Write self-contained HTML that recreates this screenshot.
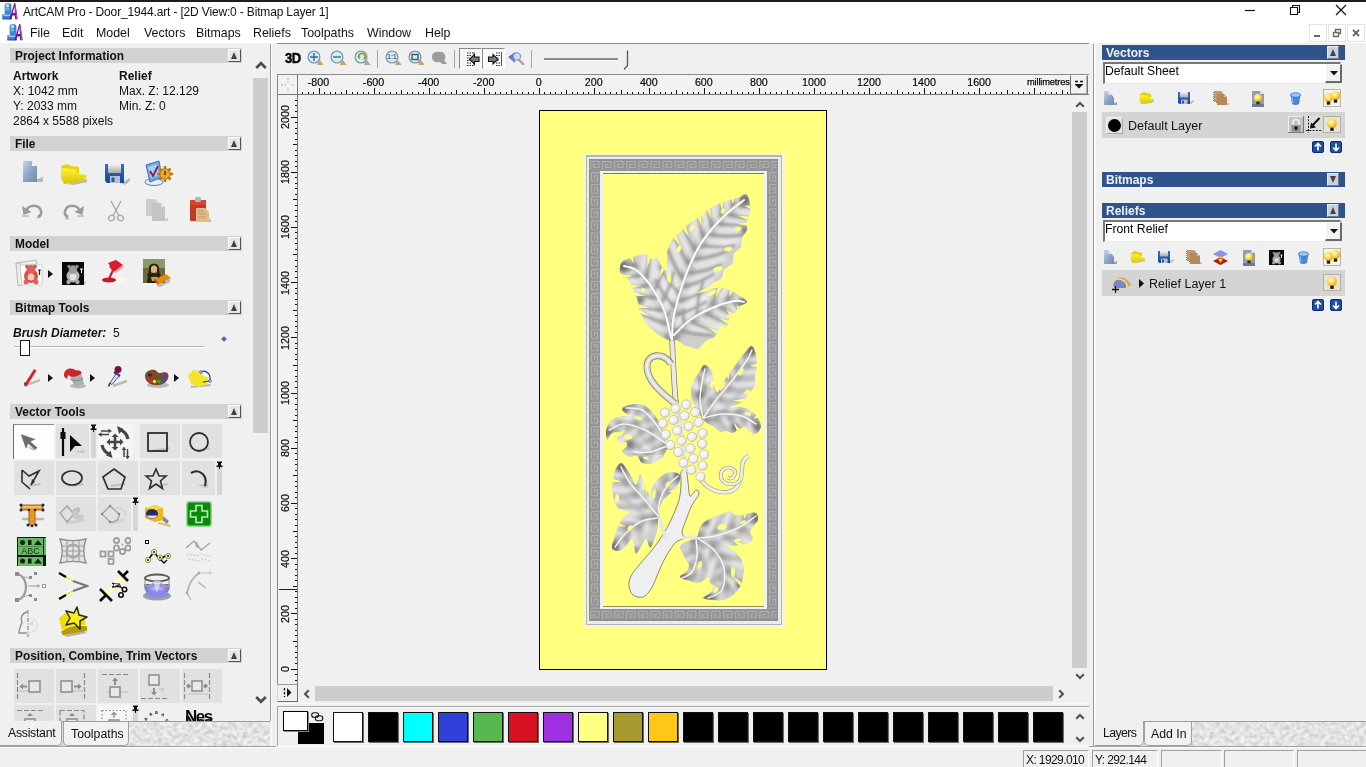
<!DOCTYPE html><html><head><meta charset="utf-8"><title>ArtCAM Pro</title><style>
*{box-sizing:border-box;margin:0;padding:0}
html,body{width:1366px;height:767px;overflow:hidden;background:#f0f0f0;font-family:"Liberation Sans",sans-serif;font-size:12px;color:#000}
.a{position:absolute}
.t{position:absolute;white-space:nowrap;line-height:1;margin-top:1px}
.b{font-weight:bold}
.hdr{position:absolute;left:10px;width:232px;height:15px;background:#d2d2d2}
.hdr span{position:absolute;left:5px;top:2px;font-weight:bold;font-size:11.900px;line-height:13px;white-space:nowrap;color:#111}
.hbtn{position:absolute;width:12px;height:13px;background:#e6e6e6;border-right:1px solid #555;border-bottom:1px solid #555;border-left:1px solid #fff;border-top:1px solid #fff}
.hbtn i{position:absolute;left:1.500px;top:2px;width:0;height:0;border-left:3.500px solid transparent;border-right:3.500px solid transparent;border-bottom:7px solid #444}
.hbtn.dn i{border-bottom:none;border-top:7px solid #444}
.bh{position:absolute;left:1102px;width:243px;height:15px;background:#2f548b}
.bh span{position:absolute;left:4px;top:2px;font-weight:bold;font-size:12px;line-height:13px;color:#eef2f8;white-space:nowrap}
.combo{position:absolute;left:1103px;width:238px;height:22px;background:#fff;border-top:2px solid #777;border-left:2px solid #777;border-bottom:1px solid #e8e8e8;border-right:1px solid #e8e8e8}
.combo span{position:absolute;left:0px;top:0px;font-size:12.200px;line-height:14px;white-space:nowrap}
.lrow{position:absolute;left:1102px;width:243px;height:26px;background:#d4d4d4}
</style></head><body><div id="app" style="position:absolute;left:0;top:0;width:1366px;height:767px;will-change:transform"><div class="a" style="left:0;top:0;width:1366px;height:2px;background:#1c1c1c"></div><div class="a" style="left:0;top:2px;width:1366px;height:41px;background:#fff"></div><svg class="a" style="left:2.3px;top:2.7px" width="16" height="17" viewBox="0 0 16 17"><rect x="2.600" y=".3" width="6.800" height="11.500" rx="2.200" fill="#3f86d2"/><rect x="3.600" y="1" width="3.600" height="3.200" rx="1.500" fill="#b9e2f4"/><rect x="3.200" y="4.800" width="4" height="2.600" fill="#6db0e6"/><path d="M.3 11.200h9.400v4.800H.3z" fill="#3b7fd4"/><path d="M1.500 12.300h6.500" stroke="#cfe6fa" stroke-width=".9"/><path d="M.3 15.300h9.400v1.200H.3z" fill="#2559b2"/><path d="M12.300 0l1 0 2.400 16.300h-2.500l-.4-3.800h-2.300l-1.300 3.800H7.300z" fill="#6b1b8f"/><path d="M12.400 3.500l.5 6.500h-2.200z" fill="#fff"/><path d="M13.300 3l1.600 13" stroke="#c24ad0" stroke-width=".9"/></svg><svg class="a" style="left:7.3px;top:23.7px" width="16" height="17" viewBox="0 0 16 17"><rect x="2.600" y=".3" width="6.800" height="11.500" rx="2.200" fill="#3f86d2"/><rect x="3.600" y="1" width="3.600" height="3.200" rx="1.500" fill="#b9e2f4"/><rect x="3.200" y="4.800" width="4" height="2.600" fill="#6db0e6"/><path d="M.3 11.200h9.400v4.800H.3z" fill="#3b7fd4"/><path d="M1.500 12.300h6.500" stroke="#cfe6fa" stroke-width=".9"/><path d="M.3 15.300h9.400v1.200H.3z" fill="#2559b2"/><path d="M12.300 0l1 0 2.400 16.300h-2.500l-.4-3.800h-2.300l-1.300 3.800H7.300z" fill="#6b1b8f"/><path d="M12.400 3.500l.5 6.500h-2.200z" fill="#fff"/><path d="M13.300 3l1.600 13" stroke="#c24ad0" stroke-width=".9"/></svg><div class="t" style="left:23px;top:5px;font-size:12px;letter-spacing:-.16px;color:#111">ArtCAM Pro - Door_1944.art - [2D View:0 - Bitmap Layer 1]</div><div class="t" style="left:30px;top:26px;font-size:12.400px;color:#111">File</div><div class="t" style="left:62px;top:26px;font-size:12.400px;color:#111">Edit</div><div class="t" style="left:96px;top:26px;font-size:12.400px;color:#111">Model</div><div class="t" style="left:144px;top:26px;font-size:12.400px;color:#111">Vectors</div><div class="t" style="left:196px;top:26px;font-size:12.400px;color:#111">Bitmaps</div><div class="t" style="left:253px;top:26px;font-size:12.400px;color:#111">Reliefs</div><div class="t" style="left:301px;top:26px;font-size:12.400px;color:#111">Toolpaths</div><div class="t" style="left:367px;top:26px;font-size:12.400px;color:#111">Window</div><div class="t" style="left:425px;top:26px;font-size:12.400px;color:#111">Help</div><svg class="a" style="left:1240px;top:2px" width="126" height="20" viewBox="0 0 126 20"><path d="M5 8.500h10" stroke="#111" stroke-width="1.2"/><path d="M50.500 5.500h7v7h-7zM52.500 5.500v-2h7v7h-2" stroke="#111" stroke-width="1.1" fill="none"/><path d="M96 3l10 10M106 3l-10 10" stroke="#111" stroke-width="1.2"/></svg><svg class="a" style="left:1308px;top:24px" width="58" height="18" viewBox="0 0 58 18"><g fill="none" stroke="#e4e4e4"><rect x="1.500" y="0.500" width="17" height="17"/><rect x="20.500" y="0.500" width="17" height="17"/><rect x="39.500" y="0.500" width="17" height="17"/></g><path d="M6 12h6" stroke="#666" stroke-width="2"/><path d="M25.500 8.500h5v4h-5zM27.500 8v-2.500h5v4h-2" stroke="#666" stroke-width="1.300" fill="none"/><path d="M45 6l6 6M51 6l-6 6" stroke="#666" stroke-width="1.800"/></svg><div class="a" style="left:270px;top:44px;width:1px;height:677px;background:#9a9a9a"></div><div class="a" style="left:271px;top:44px;width:1px;height:703px;background:#fcfcfc"></div><div class="a" style="left:1094px;top:44px;width:2px;height:703px;background:#fafafa"></div><div class="a" style="left:1093px;top:44px;width:1px;height:703px;background:#9a9a9a"></div><div class="a" style="left:277px;top:43px;width:812px;height:1px;background:#8c8c8c"></div><svg class="a" width="0" height="0" style="left:0;top:0"><defs>
<linearGradient id="gDoc" x1="0" y1="0" x2="1" y2="1"><stop offset="0" stop-color="#c9d6ea"/><stop offset=".5" stop-color="#8fa6c8"/><stop offset="1" stop-color="#6f88ad"/></linearGradient>
<linearGradient id="gFold" x1="0" y1="0" x2="0" y2="1"><stop offset="0" stop-color="#fff23a"/><stop offset="1" stop-color="#d9c400"/></linearGradient>
<linearGradient id="gBlue" x1="0" y1="0" x2="0" y2="1"><stop offset="0" stop-color="#2d6fd0"/><stop offset="1" stop-color="#1548a0"/></linearGradient>
<linearGradient id="gMet" x1="0" y1="0" x2="0" y2="1"><stop offset="0" stop-color="#f4f4f4"/><stop offset="1" stop-color="#a8a8a8"/></linearGradient>
<radialGradient id="gBulb" cx=".4" cy=".35" r=".7"><stop offset="0" stop-color="#fffbe0"/><stop offset=".5" stop-color="#ffd84a"/><stop offset="1" stop-color="#e0a000"/></radialGradient>
<radialGradient id="gPurp" cx=".5" cy=".4" r=".7"><stop offset="0" stop-color="#c8c4ff"/><stop offset="1" stop-color="#4a46c8"/></radialGradient>
</defs></svg><div class="hdr" style="top:48px"><span>Project Information</span></div><div class="hbtn" style="left:228px;top:49px;width:13px"><i style="left:2px"></i></div><div class="t b" style="left:13px;top:69px;font-size:12px;color:#111">Artwork</div><div class="t b" style="left:119px;top:69px;font-size:12px;color:#111">Relief</div><div class="t" style="left:13px;top:84px;font-size:12px;color:#111">X: 1042 mm</div><div class="t" style="left:119px;top:84px;font-size:12px;color:#111">Max. Z: 12.129</div><div class="t" style="left:13px;top:99px;font-size:12px;color:#111">Y: 2033 mm</div><div class="t" style="left:119px;top:99px;font-size:12px;color:#111">Min. Z: 0</div><div class="t" style="left:13px;top:114px;font-size:12px;color:#111">2864 x 5588 pixels</div><div class="hdr" style="top:136px"><span>File</span></div><div class="hbtn" style="left:228px;top:137px;width:13px"><i style="left:2px"></i></div><svg class="a" style="left:21px;top:160px" width="24" height="26" viewBox="0 0 24 26"><path d="M12 21l10-4v5H4z" fill="#b9b9b9"/><path d="M2 1h9l5 5v16H2z" fill="url(#gDoc)"/><path d="M11 1v5h5z" fill="#f4f7fc"/></svg><svg class="a" style="left:59px;top:162px" width="30" height="24" viewBox="0 0 30 24"><path d="M8 22l20-5v3l-14 3z" fill="#b9b9b9"/><path d="M2 4l6-2 4 2 8 1v6l-16 8z" fill="#e9d400"/><path d="M2 6l14 1 4 5 8 1-3 6-20 3-3-6z" fill="url(#gFold)"/></svg><svg class="a" style="left:103px;top:162px" width="28" height="24" viewBox="0 0 28 24"><path d="M18 21l9-5v3l-5 4z" fill="#b9b9b9"/><path d="M2 2h19v19H4l-2-2z" fill="url(#gBlue)"/><rect x="5" y="2" width="13" height="9" fill="url(#gMet)"/><rect x="7" y="14" width="10" height="7" fill="#b9c0cc"/><rect x="8.500" y="15.500" width="3" height="4.500" fill="#2558b0"/></svg><svg class="a" style="left:143px;top:159px" width="30" height="28" viewBox="0 0 30 28"><ellipse cx="11" cy="23" rx="9" ry="3.500" fill="#e8ecf6" stroke="#5a78b8" stroke-width="1"/><path d="M3 6l13-4 3 16-12 5z" fill="#6fa8e8" stroke="#3f6cc0" stroke-width="1"/><path d="M5 8l9-3 2 11-8 3z" fill="#9fd0f6"/><path d="M7 12l3 5 5-10" stroke="#a01030" stroke-width="1.800" fill="none"/><circle cx="22" cy="15" r="6" fill="#d99a1a"/><circle cx="22" cy="15" r="2" fill="#6b4a08"/><path d="M22 7v16M14 15h16M16.500 9.500l11 11M27.500 9.500l-11 11" stroke="#b07810" stroke-width="2.500"/><circle cx="22" cy="15" r="4.500" fill="#e6aa28"/><path d="M22 12v4" stroke="#5a3c00" stroke-width="1.600"/></svg><svg class="a" style="left:20px;top:202px" width="26" height="18" viewBox="0 0 26 18"><path d="M2 14h7M17 16l4-2" stroke="#c6c6c6" stroke-width="2"/><path d="M6 9c3-7 13-7 15 0 .8 3-1 5-3 6" fill="none" stroke="#9a9a9a" stroke-width="2.600"/><path d="M2 4l1.500 9 8-3z" fill="#9a9a9a"/></svg><svg class="a" style="left:60px;top:202px" width="26" height="18" viewBox="0 0 26 18"><path d="M17 14h7M5 16l4 1" stroke="#c6c6c6" stroke-width="2"/><path d="M20 9c-3-7-13-7-15 0-.8 3 1 5 3 6" fill="none" stroke="#9a9a9a" stroke-width="2.600"/><path d="M24 4l-1.500 9-8-3z" fill="#9a9a9a"/></svg><svg class="a" style="left:106px;top:199px" width="20" height="24" viewBox="0 0 20 24"><path d="M5 2l8 15M15 2l-8 15" stroke="#a8a8a8" stroke-width="1.400" fill="none"/><ellipse cx="5.500" cy="19" rx="3" ry="2.600" fill="none" stroke="#a8a8a8" stroke-width="1.400" transform="rotate(-30 5.500 19)"/><ellipse cx="14.500" cy="19" rx="3" ry="2.600" fill="none" stroke="#a8a8a8" stroke-width="1.400" transform="rotate(30 14.500 19)"/></svg><svg class="a" style="left:144px;top:197px" width="26" height="26" viewBox="0 0 26 26"><path d="M12 24l12-3v3H8z" fill="#cfcfcf"/><path d="M2 2h9l3 3v14H2z" fill="#cdcdcd"/><path d="M8 6h9l4 4v14H8z" fill="#c4c4c4"/><path d="M17 6v4h4z" fill="#e4e4e4"/></svg><svg class="a" style="left:188px;top:196px" width="24" height="28" viewBox="0 0 24 28"><path d="M10 26l13-3v3H7z" fill="#b9b9b9"/><rect x="2" y="4" width="16" height="21" rx="1" fill="#c33a24"/><path d="M2 4h16v5H2z" fill="#d9442c"/><rect x="7" y="1" width="6" height="5" rx="1.500" fill="#b9b2c4"/><path d="M8 12h9l4 4v10H8z" fill="#e2b988"/><path d="M10 15h6M10 18h8M10 21h8" stroke="#c79660" stroke-width="1"/></svg><div class="hdr" style="top:236px"><span>Model</span></div><div class="hbtn" style="left:228px;top:237px;width:13px"><i style="left:2px"></i></div><svg class="a" style="left:14px;top:258px" width="32" height="30" viewBox="0 0 32 30"><path d="M2 5l20-3 1 4-20 3z" fill="#ededed" stroke="#aaa" stroke-width=".8"/><path d="M2 5l2 23 4-1-2-22z" fill="#ededed" stroke="#aaa" stroke-width=".8"/><path d="M6 7h22v20H8z" fill="#fff" stroke="#c8c8c8" stroke-width=".8"/><circle cx="17" cy="18" r="7" fill="#d6504a"/><circle cx="17" cy="11.500" r="4.500" fill="#e0605a"/><circle cx="13" cy="8.500" r="1.800" fill="#d6504a"/><circle cx="21" cy="8.500" r="1.800" fill="#d6504a"/><circle cx="17" cy="19" r="3.500" fill="#f7c9c4"/><circle cx="12" cy="24" r="2.500" fill="#e0605a"/><circle cx="22" cy="24" r="2.500" fill="#e0605a"/><path d="M24 12h3M25.500 12v5" stroke="#222" stroke-width="1.200"/></svg><svg class="a" style="left:48px;top:270px" width="5" height="8" viewBox="0 0 5 8"><path d="M0 0l5 4-5 4z" fill="#111"/></svg><svg class="a" style="left:61px;top:261px" width="26" height="26" viewBox="0 0 26 26"><path d="M22 22l3-2v3z" fill="#b9b9b9"/><rect x="1" y="1" width="22" height="23" fill="#080808"/><circle cx="12" cy="15" r="6.500" fill="#b4b4b4"/><circle cx="12" cy="8.500" r="4.200" fill="#9a9a9a"/><circle cx="8" cy="5.500" r="1.800" fill="#888"/><circle cx="16" cy="5.500" r="1.800" fill="#888"/><circle cx="12" cy="16" r="3.300" fill="#e4e4e4"/><circle cx="7.500" cy="21" r="2.200" fill="#aaa"/><circle cx="16.500" cy="21" r="2.200" fill="#aaa"/><path d="M19 8h3M20.500 8v4" stroke="#fff" stroke-width="1.100"/></svg><svg class="a" style="left:99px;top:259px" width="30" height="26" viewBox="0 0 30 26"><ellipse cx="17" cy="21" rx="11" ry="3.500" fill="#fbf6ec"/><ellipse cx="10" cy="21" rx="7" ry="2.600" fill="#c81824"/><path d="M10 20l4-9" stroke="#c81824" stroke-width="2"/><path d="M14 11l-3-4" stroke="#c81824" stroke-width="2"/><path d="M9 4l8-3 7 5-9 7z" fill="#d81c28"/><path d="M15 13l9-7 1 2-8 6z" fill="#f6a0a0"/></svg><svg class="a" style="left:142px;top:258px" width="30" height="30" viewBox="0 0 30 30"><path d="M14 28l14-7v3l-10 5z" fill="#b9b9b9"/><rect x="1" y="1" width="22" height="24" fill="#6b6a3a"/><path d="M1 1h22v9H1z" fill="#8a9a6a"/><path d="M5 25c0-8 3-10 7-10s7 2 7 10z" fill="#2a2418"/><ellipse cx="12" cy="10" rx="4" ry="5" fill="#d9b27a"/><path d="M7 10c0-6 10-6 10 0 0 4 1 6 2 8h-4V9l-3-2-3 2v9H5c1-2 2-4 2-8z" fill="#2a1c10"/><path d="M9 19h7l-2 4h-4z" fill="#caa068"/><path d="M12 22l12-6 5 4-13 7z" fill="#e88a10"/><path d="M12 22l4 5v-3l-4-4z" fill="#a85c00"/></svg><div class="hdr" style="top:300px"><span>Bitmap Tools</span></div><div class="hbtn" style="left:228px;top:301px;width:13px"><i style="left:2px"></i></div><div class="t b" style="left:13px;top:326px;font-size:12px;font-style:italic;color:#111">Brush Diameter:</div><div class="t" style="left:113px;top:326px;font-size:12px;color:#111">5</div><div class="a" style="left:14px;top:346px;width:190px;height:2px;background:#b4b4b4;border-bottom:1px solid #fff"></div><div class="a" style="left:20px;top:340px;width:10px;height:16px;background:#fff;border:1px solid #1a1a1a"></div><div class="a" style="left:222px;top:337px;width:4px;height:4px;background:#4a6a9a;transform:rotate(45deg)"></div><svg class="a" style="left:20px;top:367px" width="24" height="22" viewBox="0 0 24 22"><path d="M4 19l16-6" stroke="#b9b9b9" stroke-width="2"/><path d="M4 18l10-16 2.500 1.500-10 16z" fill="#d8202c"/><path d="M4 18l.5-3 2 1.500z" fill="#333"/></svg><svg class="a" style="left:48px;top:374px" width="5" height="8" viewBox="0 0 5 8"><path d="M0 0l5 4-5 4z" fill="#111"/></svg><svg class="a" style="left:61px;top:366px" width="28" height="24" viewBox="0 0 28 24"><ellipse cx="17" cy="20" rx="8" ry="2.500" fill="#b9b9b9"/><path d="M8 8l12-2 3 12-9 3z" fill="#a8b0b0"/><ellipse cx="14" cy="7.500" rx="6.500" ry="3" fill="#d02020" transform="rotate(-12 14 7.500)"/><path d="M3 8c1-6 9-7 12-3-4 0-8 2-9 8-2-1-3.500-3-3-5z" fill="#d02828"/><path d="M9 13c4 3 10 2 13-1" stroke="#788" stroke-width="1" fill="none"/></svg><svg class="a" style="left:90px;top:374px" width="5" height="8" viewBox="0 0 5 8"><path d="M0 0l5 4-5 4z" fill="#111"/></svg><svg class="a" style="left:105px;top:365px" width="26" height="24" viewBox="0 0 26 24"><path d="M8 21l14-5" stroke="#b9b9b9" stroke-width="2.500"/><circle cx="13" cy="4.500" r="3.500" fill="#7a1040"/><path d="M9 7l6 4" stroke="#3a2a6a" stroke-width="2.200"/><path d="M11 9l-6 9 2 1.500 7-8.500z" fill="#dfe8ff" stroke="#4848a8" stroke-width="1"/><path d="M5 18l-1.500 3.500" stroke="#2828a0" stroke-width="1.600"/></svg><svg class="a" style="left:143px;top:367px" width="28" height="22" viewBox="0 0 28 22"><ellipse cx="15" cy="18" rx="11" ry="3" fill="#b9b9b9"/><path d="M2 9c0-5 6-7 10-6 2 .5 2 3 5 3s6-2 8 1c2 4-2 10-9 11-8 1-14-3-14-9z" fill="#7a4a2a"/><ellipse cx="7" cy="8" rx="2" ry="1.500" fill="#3a2010"/><circle cx="7" cy="13" r="1.800" fill="#e02020"/><circle cx="11.500" cy="14.500" r="1.800" fill="#f0e020"/><circle cx="16" cy="14.500" r="1.800" fill="#30b030"/><circle cx="20" cy="13" r="1.800" fill="#3050e0"/><circle cx="22.500" cy="9.500" r="1.600" fill="#7030c0"/></svg><svg class="a" style="left:174px;top:374px" width="5" height="8" viewBox="0 0 5 8"><path d="M0 0l5 4-5 4z" fill="#111"/></svg><svg class="a" style="left:185px;top:366px" width="30" height="24" viewBox="0 0 30 24"><path d="M6 21l20-2" stroke="#b9b9b9" stroke-width="2"/><path d="M3 10l5-6 7 1 3 5 6 2-2 6-8 3-8-3z" fill="#f4e42a"/><path d="M16 6c5-3 10 2 9 9l-7 1" fill="none" stroke="#2a3a9a" stroke-width="1.200"/><circle cx="16" cy="6" r="1.300" fill="#fff" stroke="#2a3a9a" stroke-width=".8"/><circle cx="25" cy="15" r="1.300" fill="#fff" stroke="#2a3a9a" stroke-width=".8"/></svg><div class="hdr" style="top:404px"><span>Vector Tools</span></div><div class="hbtn" style="left:228px;top:405px;width:13px"><i style="left:2px"></i></div><div class="hdr" style="top:648px"><span>Position, Combine, Trim Vectors</span></div><div class="hbtn" style="left:228px;top:649px;width:13px"><i style="left:2px"></i></div><div class="a" style="left:13px;top:424px;width:41px;height:35px;background:#fdfdfd;border-left:1px solid #6a6a6a;border-top:1px solid #8a8a8a"></div><svg class="a" style="left:19px;top:431px" width="22" height="22" viewBox="0 0 22 22"><path d="M6 15l12 3-4 1.500z" fill="#c4c4c4"/><path d="M3 2l14 7-5.500 1.500 6 7-2.500 2-6-7-3 4.500z" fill="#6e6e6e" transform="rotate(-8 11 11)"/></svg><div class="a" style="left:56px;top:424px;width:33px;height:34px;background:#e1e1e1"></div><svg class="a" style="left:58px;top:426px" width="28" height="32" viewBox="0 0 28 32"><path d="M16 26l10-2v3z" fill="#c4c4c4"/><path d="M5 2v28" stroke="#0a0a0a" stroke-width="2.200"/><rect x="2.500" y="6" width="5" height="7" fill="#0a0a0a"/><path d="M12 9l12 11h-7l-5 6z" fill="#0a0a0a"/></svg><div class="a" style="left:91px;top:428px;width:5px;height:30px;background:#d6d6d6"></div><svg class="a" style="left:90px;top:424px" width="7" height="8" viewBox="0 0 7 8"><path d="M1 .5h5v1.500H5v2.500h1.500V6H4v2H3V6H.5V4.500H2V2H1z" fill="#111"/></svg><div class="a" style="left:98px;top:424px;width:35px;height:34px;background:#f5f5f5"></div><svg class="a" style="left:98px;top:425px" width="34" height="34" viewBox="0 0 34 34"><path d="M17 8.500l3.500 3.500h-2.200v3.700h3.700v-2.200l3.500 3.500-3.500 3.500v-2.200h-3.700v3.700h2.200L17 25.500l-3.500-3.500h2.200v-3.700H12v2.200L8.500 17l3.500-3.500v2.200h3.700V12h-2.200z" fill="#454545"/><g fill="none" stroke="#454545" stroke-width="3.200"><path d="M21.500 4.500a13 13 0 0 1 8.500 9.500"/><path d="M4 20a13 13 0 0 0 8 9.500"/></g><path d="M19 1l6.500 3-4.500 5z" fill="#454545"/><path d="M14.500 33l-6.500-2.500 4.500-5z" fill="#454545"/><path d="M3 6h8M3 9.500h8" stroke="#454545" stroke-width="1.500"/><path d="M10.500 3.800l3.500 2.200-3.500 2.200zM3.500 11.700L0 9.500l3.500-2.200z" fill="#454545"/><path d="M26 24v8M29.500 24v8" stroke="#454545" stroke-width="1.500"/><path d="M23.800 25l2.200-3.500 2.200 3.500zM27.300 31l2.200 3.500 2.200-3.500z" fill="#454545"/></svg><div class="a" style="left:140px;top:424px;width:40px;height:34px;background:#e1e1e1"></div><svg class="a" style="left:145px;top:431px" width="26" height="24" viewBox="0 0 26 24"><path d="M6 19l18-3 1 2-16 3z" fill="#c4c4c4"/><rect x="3" y="2" width="19" height="18" fill="none" stroke="#2e2e2e" stroke-width="1.800"/></svg><div class="a" style="left:182px;top:424px;width:40px;height:34px;background:#e1e1e1"></div><svg class="a" style="left:187px;top:431px" width="26" height="24" viewBox="0 0 26 24"><path d="M8 19l14-3 2 2-12 3z" fill="#c4c4c4"/><circle cx="12" cy="11" r="9" fill="none" stroke="#2e2e2e" stroke-width="1.800"/></svg><div class="a" style="left:14px;top:461px;width:40px;height:34px;background:#e1e1e1"></div><svg class="a" style="left:18px;top:467px" width="26" height="24" viewBox="0 0 26 24"><path d="M6 19l16-3 1 2-12 2z" fill="#c4c4c4"/><path d="M4 3l7 6 10-5-8 14" fill="none" stroke="#2e2e2e" stroke-width="1.600"/><path d="M4 3v12l8 7" fill="none" stroke="#2e2e2e" stroke-width="1.600"/><path d="M13 18l1-6 3 3z" fill="#2e2e2e"/></svg><div class="a" style="left:56px;top:461px;width:40px;height:34px;background:#e1e1e1"></div><svg class="a" style="left:59px;top:469px" width="28" height="20" viewBox="0 0 28 20"><path d="M10 16l14-2 1 2-12 2z" fill="#c4c4c4"/><ellipse cx="13" cy="9" rx="10" ry="7" fill="none" stroke="#2e2e2e" stroke-width="1.700"/></svg><div class="a" style="left:98px;top:461px;width:40px;height:34px;background:#e1e1e1"></div><svg class="a" style="left:101px;top:467px" width="28" height="24" viewBox="0 0 28 24"><path d="M8 18l16-2 1 2-14 2z" fill="#c4c4c4"/><path d="M13 2l11 8-4 12H7L2 10z" fill="none" stroke="#2e2e2e" stroke-width="1.700"/></svg><div class="a" style="left:140px;top:461px;width:40px;height:34px;background:#e1e1e1"></div><svg class="a" style="left:144px;top:467px" width="26" height="24" viewBox="0 0 26 24"><path d="M12 18l12-2v2l-10 2z" fill="#c4c4c4"/><path d="M12 2l3 7h7l-5.500 5 2 7.500L12 17l-6.500 4.500 2-7.500L2 9h7z" fill="none" stroke="#2e2e2e" stroke-width="1.600"/></svg><div class="a" style="left:182px;top:461px;width:33px;height:34px;background:#e1e1e1"></div><svg class="a" style="left:187px;top:468px" width="24" height="22" viewBox="0 0 24 22"><path d="M10 17l10-1 2 3-4 1z" fill="#c4c4c4"/><path d="M4 5c8-5 17 2 14 13" fill="none" stroke="#2e2e2e" stroke-width="2.100"/></svg><div class="a" style="left:217px;top:465px;width:5px;height:30px;background:#d6d6d6"></div><svg class="a" style="left:216px;top:461px" width="7" height="8" viewBox="0 0 7 8"><path d="M1 .5h5v1.500H5v2.500h1.500V6H4v2H3V6H.5V4.500H2V2H1z" fill="#111"/></svg><svg class="a" style="left:18px;top:502px" width="28" height="26" viewBox="0 0 28 26"><path d="M4 17h22" stroke="#b8b8b8" stroke-width="2.500"/><path d="M3 3h22v5h-8v15h-6V8H3z" fill="#e89a20"/><path d="M5 4h18v2H5z" fill="#f8c060"/><path d="M3 3h22v5h-8v15h-6V8H3z" fill="none" stroke="#8a5200" stroke-width=".8"/><g fill="#1a1a7a"><circle cx="3" cy="3" r="1.500"/><circle cx="25" cy="3" r="1.500"/><circle cx="3" cy="8" r="1.500"/><circle cx="25" cy="8" r="1.500"/><circle cx="11" cy="8" r="1.300"/><circle cx="17" cy="8" r="1.300"/><circle cx="10" cy="23" r="1.500"/><circle cx="18" cy="23" r="1.500"/><circle cx="14" cy="24" r="1.300"/></g></svg><div class="a" style="left:56px;top:497px;width:40px;height:34px;background:#e1e1e1"></div><svg class="a" style="left:58px;top:503px" width="30" height="24" viewBox="0 0 30 24"><path d="M8 20l18-3" stroke="#cfcfcf" stroke-width="3"/><path d="M2 10l7-7 7 8-7 8z" fill="none" stroke="#a2a2a2" stroke-width="1.300"/><ellipse cx="18" cy="8" rx="5" ry="3" fill="#bdbdbd" transform="rotate(-35 18 8)"/><path d="M14 9c0 6 4 9 10 7l3-4c-5 1-8-1-8-6z" fill="#c8c8c8"/></svg><div class="a" style="left:98px;top:497px;width:33px;height:34px;background:#e1e1e1"></div><svg class="a" style="left:99px;top:503px" width="30" height="24" viewBox="0 0 30 24"><path d="M10 20l16-3" stroke="#d4d4d4" stroke-width="3"/><path d="M3 11l8-8 9 8c1 5-4 9-9 8z" fill="none" stroke="#a2a2a2" stroke-width="1.300"/><circle cx="3" cy="11" r="1.200" fill="#888"/><circle cx="11" cy="3" r="1.200" fill="#888"/><circle cx="20" cy="11" r="1.200" fill="#888"/><circle cx="11" cy="19" r="1.200" fill="#888"/><path d="M17 5c6-1 10 3 9 9" fill="none" stroke="#d0d0d0" stroke-width="1.300"/></svg><div class="a" style="left:133px;top:501px;width:5px;height:30px;background:#d6d6d6"></div><svg class="a" style="left:132px;top:497px" width="7" height="8" viewBox="0 0 7 8"><path d="M1 .5h5v1.500H5v2.500h1.500V6H4v2H3V6H.5V4.500H2V2H1z" fill="#111"/></svg><svg class="a" style="left:143px;top:502px" width="30" height="26" viewBox="0 0 30 26"><path d="M16 20l12 3-1 2-12-3z" fill="#d8c070"/><path d="M20 14l6 5-2 3-5-4z" fill="#8a8a9a"/><path d="M2 6l10-3 8 3v12l-8 2-10-4z" fill="#e8b820"/><path d="M2 6l10-3 8 3-8 2z" fill="#f8d850"/><ellipse cx="9" cy="12" rx="6" ry="5" fill="#2a2a6a"/><path d="M3.500 13.500a6 5 0 0 0 11 0z" fill="#e8d8d8"/></svg><svg class="a" style="left:185px;top:500px" width="28" height="28" viewBox="0 0 28 28"><rect x="1" y="1" width="26" height="26" rx="3" fill="#9ad890"/><rect x="2.500" y="2.500" width="23" height="23" rx="2" fill="#0a8a0a"/><path d="M11 5.500h6v5.500h5.500v6H17v5.500h-6V17H5.500v-6H11z" fill="none" stroke="#baf0b0" stroke-width="1.600"/></svg><svg class="a" style="left:16px;top:536px" width="30" height="30" viewBox="0 0 30 30"><rect x="1" y="1" width="29" height="29" fill="#0a1a0a"/><rect x="2" y="2" width="25" height="17" fill="#68b868"/><rect x="2" y="21" width="25" height="9" fill="#68b868"/><rect x="28" y="2" width="2" height="17" fill="#68b868"/><g fill="#0a2a0a"><circle cx="6.500" cy="6.500" r="2.500"/><rect x="12" y="4" width="3.500" height="5"/><path d="M18 9l4-5 4 5z"/><circle cx="6.500" cy="25" r="2.500"/><rect x="12" y="22.500" width="3.500" height="5"/><path d="M18 27.500l4-5 4 5z"/></g><text x="14.500" y="17.500" font-family="Liberation Sans" font-size="9" text-anchor="middle" fill="#0a3a0a">ABC</text><path d="M2 10.500h26" stroke="#3a7a3a" stroke-width=".6"/></svg><svg class="a" style="left:58px;top:537px" width="30" height="28" viewBox="0 0 30 28"><path d="M2 2c8 2 18 2 26 0-3 8-3 16 0 24-8-2-18-2-26 0 3-8 3-16 0-24z" fill="#e4e4e4" stroke="#8e8e8e" stroke-width="1.400"/><path d="M9 3v22M15 3.500v21M21 3v22M3.500 9h23M4.500 14h21M3.500 19h23" stroke="#9a9a9a" stroke-width="1"/><circle cx="15" cy="14" r="6.500" fill="none" stroke="#a8a8a8" stroke-width="2.200"/></svg><svg class="a" style="left:99px;top:537px" width="32" height="28" viewBox="0 0 32 28"><g fill="none" stroke="#9c9c9c" stroke-width="1.800"><rect x="1.500" y="14.500" width="5" height="5"/><rect x="9.500" y="14.500" width="5" height="5"/><rect x="9.500" y="22" width="5" height="5"/><circle cx="17.500" cy="3.500" r="2.600"/><circle cx="29" cy="3.500" r="2.600"/><circle cx="17.500" cy="11" r="2.600"/><circle cx="29" cy="11" r="2.600"/><circle cx="23.500" cy="14.500" r="2.600"/></g><circle cx="23.500" cy="7.500" r="1" fill="#9c9c9c"/></svg><svg class="a" style="left:143px;top:539px" width="30" height="26" viewBox="0 0 30 26"><rect x="2.500" y="1.500" width="3" height="3" fill="#fff" stroke="#111" stroke-width="1"/><path d="M5 21l6-8 6 8 5-4" fill="none" stroke="#111" stroke-width="1.700"/><g fill="#f4f4b0" stroke="#6a6a3a" stroke-width=".7"><circle cx="5" cy="21" r="2.600"/><circle cx="11" cy="13" r="2.600"/><circle cx="17" cy="18.500" r="2.600"/><circle cx="25" cy="17" r="2.600"/></g><path d="M18 21l3 3 3-3" stroke="#111" stroke-width="1.500" fill="none"/><g fill="#111"><circle cx="5" cy="21" r=".9"/><circle cx="11" cy="13" r=".9"/><circle cx="17" cy="18.500" r=".9"/><circle cx="25" cy="17" r=".9"/></g></svg><svg class="a" style="left:184px;top:538px" width="30" height="26" viewBox="0 0 30 26"><path d="M2 10l8-7 7 9 9-7" fill="none" stroke="#a4a4a4" stroke-width="1.500"/><path d="M13 4v5M11.500 7.500l1.500 2 1.500-2" stroke="#9a9a9a" stroke-width="1" fill="none"/><path d="M3 17c4-3 8 3 12 0s8 3 12 0M4 22c4-3 8 3 12 0s7 2 10 0" fill="none" stroke="#d0d0d0" stroke-width="1.400" stroke-dasharray="2 1.500"/></svg><svg class="a" style="left:15px;top:572px" width="32" height="30" viewBox="0 0 32 30"><path d="M2 2c12 2 12 24 0 26" fill="none" stroke="#9a9a9a" stroke-width="2.200"/><path d="M13 14h12" stroke="#a8a8a8" stroke-width="1.200"/><path d="M22 12l3 2-3 2z" fill="#a8a8a8"/><g fill="#8e8e8e"><rect x="0" y="0" width="4" height="4"/><rect x="0" y="26" width="4" height="4"/><rect x="14" y="4" width="3" height="3"/><rect x="14" y="22" width="3" height="3"/><rect x="19" y="0" width="3" height="3"/><rect x="19" y="26" width="3" height="3"/></g><rect x="27.500" y="12.500" width="3" height="3" fill="#fff" stroke="#9a9a9a"/><path d="M5 4l9 2M5 26l9-3" stroke="#a8a8a8" stroke-width="1"/></svg><svg class="a" style="left:57px;top:571px" width="32" height="30" viewBox="0 0 32 30"><path d="M2 2l14 8M2 28l14-8" stroke="#ffffb0" stroke-width="4"/><path d="M2 2l7 4M2 28l7-4" stroke="#0a0a0a" stroke-width="2.400"/><path d="M9 6l7 4M9 24l7-4" stroke="#8a8a4a" stroke-width="1" stroke-dasharray="1.500 1.500"/><path d="M16 10l14 5-14 5" fill="none" stroke="#787878" stroke-width="2.200"/></svg><svg class="a" style="left:99px;top:570px" width="32" height="32" viewBox="0 0 32 32"><path d="M8 24L24 8" stroke="#ffffb8" stroke-width="5"/><path d="M19 1l10 10M24 6l5-5" stroke="#0a0a0a" stroke-width="2.600"/><path d="M1 19l12 12M1 31l6-6" stroke="#0a0a0a" stroke-width="2.600"/><path d="M13 13l10 5M13 17l9-1" stroke="#111" stroke-width="1.300"/><circle cx="25.500" cy="19.500" r="2.200" fill="#fff" stroke="#0a0a0a" stroke-width="1.600"/><circle cx="22" cy="25" r="2.200" fill="#fff" stroke="#0a0a0a" stroke-width="1.600"/><path d="M14 13.500l7 .5-6 3z" fill="#fff" stroke="#111" stroke-width=".8"/></svg><svg class="a" style="left:142px;top:572px" width="30" height="30" viewBox="0 0 30 30"><ellipse cx="15" cy="24" rx="14" ry="4.500" fill="#a0a0a0"/><path d="M2 12c0 8 4 12 13 12s13-4 13-12z" fill="url(#gPurp)"/><ellipse cx="15" cy="22" rx="12" ry="3.500" fill="#8a88e8"/><path d="M3 6v8c6 2 6-4 12-4s6 6 12 4V6" fill="none" stroke="#b0b070" stroke-width="1.300"/><ellipse cx="15" cy="6" rx="12" ry="3.500" fill="none" stroke="#5a5a5a" stroke-width="1.800"/><path d="M11 9l4 12 4-12z" fill="#e0e0ff" opacity=".7"/></svg><svg class="a" style="left:184px;top:571px" width="30" height="30" viewBox="0 0 30 30"><path d="M3 22c2-10 6-16 12-20" fill="none" stroke="#b4b4b4" stroke-width="1.800"/><path d="M15 2h12" stroke="#c8c8c8" stroke-width="1.200"/><path d="M25 0l3 2-3 2z" fill="#c8c8c8"/><path d="M14 11l8 6" stroke="#c0c0c0" stroke-width="1.600"/><path d="M3 22l4 7" stroke="#c0c0c0" stroke-width="1.400"/><circle cx="15" cy="2" r="1.400" fill="#a8a8a8"/><circle cx="3" cy="22" r="1.400" fill="#a8a8a8"/></svg><svg class="a" style="left:17px;top:608px" width="26" height="30" viewBox="0 0 26 30"><path d="M11 2v27" stroke="#8a8a8a" stroke-width="1.200" stroke-dasharray="4 1.500 1 1.500"/><path d="M10 4c-5 1-7 6-5 10-1 4-3 6-3 11h8" fill="none" stroke="#8e8e8e" stroke-width="1.400"/><path d="M12 25c6-1 9-5 8-10-1-3-3-4-5-4" fill="none" stroke="#dcdcdc" stroke-width="1.200"/><path d="M12 16l4-3v5z" fill="#d4d4d4"/></svg><svg class="a" style="left:57px;top:606px" width="32" height="32" viewBox="0 0 32 32"><path d="M4 28l22-3 4 2-20 4z" fill="#b4b4b4"/><path d="M2 12l8-6 6 2 12 3v14L6 29z" fill="#f0dc00"/><path d="M4 26c4-6 14-8 26-6v5L6 29z" fill="#b49c00"/><path d="M5 25c5-5 14-7 25-5" fill="none" stroke="#fff8a0" stroke-width="1"/><path d="M20 1l2 8 8 2-7 4 0 8-6-6-8 2 4-7-4-7 8 2z" fill="#f8ec20" stroke="#2a2a1a" stroke-width="1.500" stroke-linejoin="round"/></svg><div class="a" style="left:14px;top:669px;width:40px;height:34px;background:#e1e1e1"></div><svg class="a" style="left:15px;top:672px" width="30" height="28" viewBox="0 0 30 28"><path d="M4 19h22" stroke="#cfcfcf" stroke-width="2"/><path d="M2.500 1v26" stroke="#8a8a8a" stroke-width="1.200" stroke-dasharray="5 2"/><rect x="14" y="9" width="11" height="11" fill="#e8e8e8" stroke="#8a8a8a" stroke-width="1.500"/><path d="M12 14.500H6" stroke="#8a8a8a" stroke-width="1.800"/><path d="M8 11.500l-3.500 3 3.500 3z" fill="#8a8a8a"/></svg><div class="a" style="left:56px;top:669px;width:40px;height:34px;background:#e1e1e1"></div><svg class="a" style="left:57px;top:672px" width="30" height="28" viewBox="0 0 30 28"><path d="M4 19h22" stroke="#cfcfcf" stroke-width="2"/><path d="M27.500 1v26" stroke="#8a8a8a" stroke-width="1.200" stroke-dasharray="5 2"/><rect x="4" y="9" width="11" height="11" fill="#e8e8e8" stroke="#8a8a8a" stroke-width="1.500"/><path d="M17 14.500h6" stroke="#8a8a8a" stroke-width="1.800"/><path d="M21 11.500l3.500 3-3.500 3z" fill="#8a8a8a"/></svg><div class="a" style="left:98px;top:669px;width:40px;height:34px;background:#e1e1e1"></div><svg class="a" style="left:100px;top:672px" width="30" height="28" viewBox="0 0 30 28"><path d="M6 20h22" stroke="#cfcfcf" stroke-width="2"/><path d="M2 2.500h26" stroke="#8a8a8a" stroke-width="1.200" stroke-dasharray="5 2"/><rect x="10" y="15" width="10" height="10" fill="#e8e8e8" stroke="#8a8a8a" stroke-width="1.500"/><path d="M15 13V7" stroke="#8a8a8a" stroke-width="1.800"/><path d="M12 9l3-3.500 3 3.500z" fill="#8a8a8a"/></svg><div class="a" style="left:140px;top:669px;width:40px;height:34px;background:#e1e1e1"></div><svg class="a" style="left:140px;top:672px" width="30" height="28" viewBox="0 0 30 28"><path d="M18 17l8-2-3 5z" fill="#cfcfcf"/><path d="M1 26.500h26" stroke="#8a8a8a" stroke-width="1.200" stroke-dasharray="5 2"/><rect x="9" y="3" width="10" height="10" fill="#e8e8e8" stroke="#8a8a8a" stroke-width="1.500"/><path d="M14 16v6" stroke="#8a8a8a" stroke-width="1.800"/><path d="M11 20l3 3.500 3-3.500z" fill="#8a8a8a"/></svg><div class="a" style="left:182px;top:669px;width:40px;height:34px;background:#e1e1e1"></div><svg class="a" style="left:182px;top:672px" width="30" height="28" viewBox="0 0 30 28"><path d="M6 22h20" stroke="#cfcfcf" stroke-width="2"/><path d="M2.500 1v26M27.500 1v26" stroke="#8a8a8a" stroke-width="1.200" stroke-dasharray="5 2"/><rect x="10" y="9" width="10" height="10" fill="#e8e8e8" stroke="#8a8a8a" stroke-width="1.500"/><path d="M4 14l2.500-2.500L9 14l-2.500 2.500zM21 14l2.500-2.500L26 14l-2.500 2.500z" fill="#8a8a8a"/></svg><div class="a" style="left:10px;top:705px;width:235px;height:16px;overflow:hidden"><div class="a" style="margin-left:-10px;margin-top:-705px;left:14px;top:705px;width:40px;height:34px;background:#e1e1e1"></div><svg class="a" style="margin-left:-10px;margin-top:-705px;left:15px;top:708px" width="30" height="28" viewBox="0 0 30 28"><path d="M2 2.500h26" stroke="#8a8a8a" stroke-width="1.200" stroke-dasharray="5 2"/><path d="M12 8l3-3 3 3z" fill="#8a8a8a"/><rect x="10" y="11" width="10" height="10" fill="#e8e8e8" stroke="#8a8a8a" stroke-width="1.500"/></svg><div class="a" style="margin-left:-10px;margin-top:-705px;left:56px;top:705px;width:40px;height:34px;background:#e1e1e1"></div><svg class="a" style="margin-left:-10px;margin-top:-705px;left:57px;top:708px" width="30" height="28" viewBox="0 0 30 28"><rect x="3" y="2.500" width="24" height="24" fill="none" stroke="#8a8a8a" stroke-width="1.200" stroke-dasharray="5 2"/><path d="M12 8l3-3 3 3z" fill="#8a8a8a"/><rect x="10" y="11" width="10" height="10" fill="#e8e8e8" stroke="#8a8a8a" stroke-width="1.500"/></svg><div class="a" style="margin-left:-10px;margin-top:-705px;left:98px;top:705px;width:33px;height:34px;background:#f6f6f6"></div><svg class="a" style="margin-left:-10px;margin-top:-705px;left:99px;top:708px" width="30" height="28" viewBox="0 0 30 28"><rect x="3" y="2.500" width="24" height="24" fill="none" stroke="#8a8a8a" stroke-width="1.200" stroke-dasharray="1.500 2"/><path d="M15 5v5M12.500 7l2.500-2.500L17.500 7" stroke="#8a8a8a" stroke-width="1.200" fill="none"/><rect x="10" y="12" width="10" height="10" fill="#e8e8e8" stroke="#8a8a8a" stroke-width="1.500"/></svg><div class="a" style="margin-left:-10px;margin-top:-705px;left:133px;top:709px;width:5px;height:30px;background:#d6d6d6"></div><svg class="a" style="margin-left:-10px;margin-top:-705px;left:132px;top:705px" width="7" height="8" viewBox="0 0 7 8"><path d="M1 .5h5v1.500H5v2.500h1.500V6H4v2H3V6H.5V4.500H2V2H1z" fill="#111"/></svg><svg class="a" style="margin-left:-10px;margin-top:-705px;left:142px;top:708px" width="30" height="28" viewBox="0 0 30 28"><g fill="#111" font-family="Liberation Sans" font-size="5" font-weight="bold"><text x="4" y="13" transform="rotate(-50 4 13)">a</text><text x="8" y="8" transform="rotate(-25 8 8)">a</text><text x="13" y="6">a</text><text x="19" y="7" transform="rotate(30 19 7)">a</text><text x="23" y="12" transform="rotate(60 23 12)">c</text></g></svg><div class="t b" style="left:175px;top:2px;font-size:17px;letter-spacing:-1.500px;color:#0a0a0a">Nes</div><div class="t b" style="left:175px;top:8px;font-size:17px;letter-spacing:-1.500px;color:#0a0a0a">Nes</div></div><div class="a" style="left:253px;top:55px;width:16px;height:655px;background:#f0f0f0"></div><div class="a" style="left:253px;top:78px;width:15px;height:355px;background:#cdcdcd"></div><svg class="a" style="left:254.500px;top:60px" width="12" height="10" viewBox="0 0 12 10"><path d="M1.200 8l4.800-4.800 4.800 4.800" fill="none" stroke="#4c4c4c" stroke-width="2.700"/></svg><svg class="a" style="left:254.500px;top:695px" width="12" height="10" viewBox="0 0 12 10"><path d="M1.200 2l4.800 4.800 4.800-4.800" fill="none" stroke="#4c4c4c" stroke-width="2.700"/></svg><div class="t b" style="left:285px;top:48.500px;font-size:15.500px;letter-spacing:-.7px;color:#050505;-webkit-text-stroke:.45px #050505;transform:scaleX(.84);transform-origin:0 0">3D</div><svg class="a" style="left:306.4px;top:49px" width="20" height="20" viewBox="0 0 20 20"><path d="M11.500 13.800l2.600-2.600 3.600 4.800h-6.400z" fill="#c9a273"/><circle cx="8" cy="8" r="5.900" fill="#d3ecf8" stroke="#8495a8" stroke-width="1.300"/><path d="M4 8h8M8 4v8" stroke="#3a6a8c" stroke-width="1.400"/></svg><svg class="a" style="left:329.4px;top:49px" width="20" height="20" viewBox="0 0 20 20"><path d="M11.500 13.800l2.600-2.600 3.600 4.800h-6.400z" fill="#c9a273"/><circle cx="8" cy="8" r="5.900" fill="#d3ecf8" stroke="#8495a8" stroke-width="1.300"/><path d="M4 8h8" stroke="#3a6a8c" stroke-width="1.400"/></svg><svg class="a" style="left:352.6px;top:49px" width="20" height="20" viewBox="0 0 20 20"><path d="M11.500 13.800l2.600-2.600 3.600 4.800h-6.400z" fill="#c9a273"/><circle cx="8" cy="8" r="5.900" fill="#d3ecf8" stroke="#8495a8" stroke-width="1.300"/><path d="M10.500 10.500a3.200 3.200 0 1 0-4.500-1.500" fill="none" stroke="#8aa020" stroke-width="1.600"/><path d="M4.200 7.200l1.600 3 2.200-2.400z" fill="#8aa020"/></svg><div class="a" style="left:377px;top:50px;width:1px;height:18px;background:#a8a8a8"></div><svg class="a" style="left:384px;top:49px" width="20" height="20" viewBox="0 0 20 20"><path d="M11.500 13.800l2.600-2.600 3.600 4.800h-6.400z" fill="#c9a273"/><circle cx="8" cy="8" r="5.900" fill="#d3ecf8" stroke="#8495a8" stroke-width="1.300"/><text x="8" y="10.300" font-family="Liberation Sans" font-size="6.500" font-weight="bold" text-anchor="middle" fill="#48688a">1:1</text></svg><svg class="a" style="left:406.6px;top:49px" width="20" height="20" viewBox="0 0 20 20"><path d="M11.500 13.800l2.600-2.600 3.600 4.800h-6.400z" fill="#c9a273"/><circle cx="8" cy="8" r="5.900" fill="#d3ecf8" stroke="#8495a8" stroke-width="1.300"/><rect x="5" y="5.500" width="6" height="5" fill="none" stroke="#3a5a74" stroke-width="1.400"/></svg><svg class="a" style="left:429px;top:50px" width="20" height="16" viewBox="0 0 20 16"><path d="M3 8c-1-4 3-7 7-6 3-1 6 1 6 4 1 2 0 3-1 4l3 4h-5l-2-2c-4 1-7 0-8-4z" fill="#9c9c9c"/></svg><div class="a" style="left:454px;top:50px;width:1px;height:18px;background:#a8a8a8"></div><div class="a" style="left:459px;top:48px;width:23px;height:21px;background:#f6f6f6;border-left:1px solid #8a8a8a;border-top:1px solid #8a8a8a;border-right:1px solid #fdfdfd;border-bottom:1px solid #fdfdfd"></div><div class="a" style="left:482px;top:48px;width:23px;height:21px;background:#fbfbfb;border-left:1px solid #8a8a8a;border-top:1px solid #8a8a8a;border-right:1px solid #fdfdfd;border-bottom:1px solid #fdfdfd"></div><svg class="a" style="left:464.5px;top:50px" width="16" height="18" viewBox="0 0 16 18"><path d="M2 3h6M2 5.500h4M2 8h3M2 10.500h3M2 13h4M2 15.500h6" stroke="#222" stroke-width="1" stroke-dasharray="1.500 1"/><path d="M9 2v14" stroke="#555" stroke-width="1"/><path d="M14 7v4.500H9.500v2.500L4.500 9.200 9.500 4.500V7z" fill="#7a7a7a" stroke="#111" stroke-width="1.100"/></svg><svg class="a" style="left:486.5px;top:50px" width="16" height="18" viewBox="0 0 16 18"><path d="M9 3h6M9 5.500h4M9 8h3M9 10.500h3M9 13h4M9 15.500h6" stroke="#222" stroke-width="1" stroke-dasharray="1.500 1"/><path d="M14.500 2v14" stroke="#555" stroke-width="1"/><path d="M1.500 7v4.500H6v2.500l5-4.800L6 4.500V7z" fill="#7a7a7a" stroke="#111" stroke-width="1.100"/></svg><svg class="a" style="left:507px;top:51px" width="18" height="14" viewBox="0 0 18 14"><path d="M1 6l7-5v3.500h5v4H8v3.500z" fill="#6a78c8"/><path d="M12 9l4 4" stroke="#c89a78" stroke-width="2.400" stroke-linecap="round"/><circle cx="10" cy="5.500" r="3.600" fill="#cfdcf4" stroke="#8a9ad0" stroke-width="1.200"/></svg><div class="a" style="left:531px;top:50px;width:1px;height:18px;background:#a8a8a8"></div><div class="a" style="left:544px;top:58px;width:74px;height:2px;background:#8c8c8c;border-bottom:1px solid #fafafa;height:3px"></div><svg class="a" style="left:617.5px;top:49.5px" width="11" height="21" viewBox="0 0 11 21"><path d="M1.500 1h7.500v14.500l-3 3.500" fill="none" stroke="#fff" stroke-width="1"/><path d="M1 .500h8v15l-3 3.500" fill="#efefef" stroke="none"/><path d="M9.500 .500v15l-3.500 4" fill="none" stroke="#555" stroke-width="1.300"/></svg><div class="a" style="left:277px;top:74px;width:812px;height:21px;background:#f2f2f2;border-top:1px solid #8a8a8a;border-left:1px solid #8a8a8a;border-bottom:1px solid #777"></div><div class="a" style="left:277px;top:95px;width:21px;height:589px;background:#f2f2f2;border-left:1px solid #8a8a8a;border-right:1px solid #777"></div><div class="a" style="left:297px;top:75px;width:1px;height:20px;background:#777"></div><svg class="a" style="left:281px;top:78px" width="14" height="14" viewBox="0 0 14 14"><path d="M0 7h14M7 0v14" stroke="#b0b0b0" stroke-width="1" stroke-dasharray="2 1.500"/><rect x="5" y="5" width="4" height="4" fill="#f2f2f2"/></svg><svg class="a" style="left:298px;top:75px" width="772" height="19" viewBox="0 0 772 19"><path d="M4.5 19v-2M10.5 19v-2M15.5 19v-2M21.5 19v-6M26.5 19v-2M32.5 19v-2M37.5 19v-2M43.5 19v-2M48.5 19v-4M54.5 19v-2M59.5 19v-2M65.5 19v-2M70.5 19v-2M76.5 19v-6M81.5 19v-2M87.5 19v-2M92.5 19v-2M98.5 19v-2M103.5 19v-4M109.5 19v-2M114.5 19v-2M120.5 19v-2M125.5 19v-2M131.5 19v-6M136.5 19v-2M142.5 19v-2M147.5 19v-2M153.5 19v-2M158.5 19v-4M164.5 19v-2M169.5 19v-2M175.5 19v-2M180.5 19v-2M186.5 19v-6M191.5 19v-2M197.5 19v-2M202.5 19v-2M208.5 19v-2M213.5 19v-4M219.5 19v-2M224.5 19v-2M230.5 19v-2M235.5 19v-2M241.5 19v-6M246.5 19v-2M252.5 19v-2M257.5 19v-2M263.5 19v-2M268.5 19v-4M274.5 19v-2M279.5 19v-2M285.5 19v-2M290.5 19v-2M296.5 19v-6M301.5 19v-2M307.5 19v-2M312.5 19v-2M318.5 19v-2M323.5 19v-4M329.5 19v-2M334.5 19v-2M340.5 19v-2M345.5 19v-2M351.5 19v-6M356.5 19v-2M362.5 19v-2M367.5 19v-2M373.5 19v-2M378.5 19v-4M384.5 19v-2M389.5 19v-2M395.5 19v-2M400.5 19v-2M406.5 19v-6M411.5 19v-2M417.5 19v-2M422.5 19v-2M428.5 19v-2M433.5 19v-4M439.5 19v-2M444.5 19v-2M450.5 19v-2M455.5 19v-2M461.5 19v-6M467.5 19v-2M472.5 19v-2M478.5 19v-2M483.5 19v-2M489.5 19v-4M494.5 19v-2M500.5 19v-2M505.5 19v-2M511.5 19v-2M516.5 19v-6M522.5 19v-2M527.5 19v-2M533.5 19v-2M538.5 19v-2M544.5 19v-4M549.5 19v-2M555.5 19v-2M560.5 19v-2M566.5 19v-2M571.5 19v-6M577.5 19v-2M582.5 19v-2M588.5 19v-2M593.5 19v-2M599.5 19v-4M604.5 19v-2M610.5 19v-2M615.5 19v-2M621.5 19v-2M626.5 19v-6M632.5 19v-2M637.5 19v-2M643.5 19v-2M648.5 19v-2M654.5 19v-4M659.5 19v-2M665.5 19v-2M670.5 19v-2M676.5 19v-2M681.5 19v-6M687.5 19v-2M692.5 19v-2M698.5 19v-2M703.5 19v-2M709.5 19v-4M714.5 19v-2M720.5 19v-2M725.5 19v-2M731.5 19v-2M736.5 19v-6M742.5 19v-2M747.5 19v-2M753.5 19v-2M758.5 19v-2M764.5 19v-4M769.5 19v-2" stroke="#111" stroke-width="1" shape-rendering="crispEdges"/></svg><div class="t" style="left:288.5px;width:60px;text-align:center;top:76px;font-size:10.700px;color:#0a0a0a;-webkit-text-stroke:.2px #0a0a0a">-800</div><div class="t" style="left:343.55px;width:60px;text-align:center;top:76px;font-size:10.700px;color:#0a0a0a;-webkit-text-stroke:.2px #0a0a0a">-600</div><div class="t" style="left:398.6px;width:60px;text-align:center;top:76px;font-size:10.700px;color:#0a0a0a;-webkit-text-stroke:.2px #0a0a0a">-400</div><div class="t" style="left:453.65px;width:60px;text-align:center;top:76px;font-size:10.700px;color:#0a0a0a;-webkit-text-stroke:.2px #0a0a0a">-200</div><div class="t" style="left:508.7px;width:60px;text-align:center;top:76px;font-size:10.700px;color:#0a0a0a;-webkit-text-stroke:.2px #0a0a0a">0</div><div class="t" style="left:563.75px;width:60px;text-align:center;top:76px;font-size:10.700px;color:#0a0a0a;-webkit-text-stroke:.2px #0a0a0a">200</div><div class="t" style="left:618.8px;width:60px;text-align:center;top:76px;font-size:10.700px;color:#0a0a0a;-webkit-text-stroke:.2px #0a0a0a">400</div><div class="t" style="left:673.85px;width:60px;text-align:center;top:76px;font-size:10.700px;color:#0a0a0a;-webkit-text-stroke:.2px #0a0a0a">600</div><div class="t" style="left:728.9px;width:60px;text-align:center;top:76px;font-size:10.700px;color:#0a0a0a;-webkit-text-stroke:.2px #0a0a0a">800</div><div class="t" style="left:783.95px;width:60px;text-align:center;top:76px;font-size:10.700px;color:#0a0a0a;-webkit-text-stroke:.2px #0a0a0a">1000</div><div class="t" style="left:839px;width:60px;text-align:center;top:76px;font-size:10.700px;color:#0a0a0a;-webkit-text-stroke:.2px #0a0a0a">1200</div><div class="t" style="left:894.05px;width:60px;text-align:center;top:76px;font-size:10.700px;color:#0a0a0a;-webkit-text-stroke:.2px #0a0a0a">1400</div><div class="t" style="left:949.1px;width:60px;text-align:center;top:76px;font-size:10.700px;color:#0a0a0a;-webkit-text-stroke:.2px #0a0a0a">1600</div><div class="t" style="left:1027px;top:77px;font-size:9.300px;letter-spacing:-.15px;color:#0a0a0a;-webkit-text-stroke:.25px #0a0a0a">millimetres</div><div class="a" style="left:1070px;top:75px;width:18px;height:20px;background:#f1f1f1;border-left:1px solid #6a6a6a;border-top:1px solid #fafafa;border-right:1px solid #777;border-bottom:1px solid #777;box-shadow:inset -1px -1px 0 #b0b0b0"></div><svg class="a" style="left:1074px;top:80px" width="10" height="9" viewBox="0 0 10 9"><path d="M1 1.500h3M6 1.500h3" stroke="#111" stroke-width="1.300"/><path d="M.5 4h9L5 8.500z" fill="#111"/></svg><svg class="a" style="left:278px;top:95px" width="19" height="589" viewBox="0 0 19 589"><path d="M19 585.5h-2M19 579.5h-2M19 574.5h-6M19 568.5h-2M19 562.5h-2M19 557.5h-2M19 551.5h-2M19 546.5h-4M19 540.5h-2M19 535.5h-2M19 529.5h-2M19 524.5h-2M19 518.5h-6M19 513.5h-2M19 507.5h-2M19 502.5h-2M19 496.5h-2M19 491.5h-4M19 485.5h-2M19 480.5h-2M19 474.5h-2M19 469.5h-2M19 463.5h-6M19 458.5h-2M19 452.5h-2M19 447.5h-2M19 441.5h-2M19 436.5h-4M19 430.5h-2M19 424.5h-2M19 419.5h-2M19 413.5h-2M19 408.5h-6M19 402.5h-2M19 397.5h-2M19 391.5h-2M19 386.5h-2M19 380.5h-4M19 375.5h-2M19 369.5h-2M19 364.5h-2M19 358.5h-2M19 353.5h-6M19 347.5h-2M19 342.5h-2M19 336.5h-2M19 331.5h-2M19 325.5h-4M19 320.5h-2M19 314.5h-2M19 309.5h-2M19 303.5h-2M19 298.5h-6M19 292.5h-2M19 286.5h-2M19 281.5h-2M19 275.5h-2M19 270.5h-4M19 264.5h-2M19 259.5h-2M19 253.5h-2M19 248.5h-2M19 242.5h-6M19 237.5h-2M19 231.5h-2M19 226.5h-2M19 220.5h-2M19 215.5h-4M19 209.5h-2M19 204.5h-2M19 198.5h-2M19 193.5h-2M19 187.5h-6M19 182.5h-2M19 176.5h-2M19 171.5h-2M19 165.5h-2M19 159.5h-4M19 154.5h-2M19 148.5h-2M19 143.5h-2M19 137.5h-2M19 132.5h-6M19 126.5h-2M19 121.5h-2M19 115.5h-2M19 110.5h-2M19 104.5h-4M19 99.5h-2M19 93.5h-2M19 88.5h-2M19 82.5h-2M19 77.5h-6M19 71.5h-2M19 66.5h-2M19 60.5h-2M19 55.5h-2M19 49.5h-4M19 44.5h-2M19 38.5h-2M19 33.5h-2M19 27.5h-2M19 22.5h-6M19 16.5h-2M19 10.5h-2M19 5.5h-2" stroke="#111" stroke-width="1" shape-rendering="crispEdges"/></svg><div class="t" style="left:256px;top:662px;width:60px;height:12px;text-align:center;font-size:10.700px;color:#0a0a0a;-webkit-text-stroke:.2px #0a0a0a;transform:rotate(-90deg)">0</div><div class="t" style="left:256px;top:606.8px;width:60px;height:12px;text-align:center;font-size:10.700px;color:#0a0a0a;-webkit-text-stroke:.2px #0a0a0a;transform:rotate(-90deg)">200</div><div class="t" style="left:256px;top:551.6px;width:60px;height:12px;text-align:center;font-size:10.700px;color:#0a0a0a;-webkit-text-stroke:.2px #0a0a0a;transform:rotate(-90deg)">400</div><div class="t" style="left:256px;top:496.4px;width:60px;height:12px;text-align:center;font-size:10.700px;color:#0a0a0a;-webkit-text-stroke:.2px #0a0a0a;transform:rotate(-90deg)">600</div><div class="t" style="left:256px;top:441.2px;width:60px;height:12px;text-align:center;font-size:10.700px;color:#0a0a0a;-webkit-text-stroke:.2px #0a0a0a;transform:rotate(-90deg)">800</div><div class="t" style="left:256px;top:386px;width:60px;height:12px;text-align:center;font-size:10.700px;color:#0a0a0a;-webkit-text-stroke:.2px #0a0a0a;transform:rotate(-90deg)">1000</div><div class="t" style="left:256px;top:330.8px;width:60px;height:12px;text-align:center;font-size:10.700px;color:#0a0a0a;-webkit-text-stroke:.2px #0a0a0a;transform:rotate(-90deg)">1200</div><div class="t" style="left:256px;top:275.6px;width:60px;height:12px;text-align:center;font-size:10.700px;color:#0a0a0a;-webkit-text-stroke:.2px #0a0a0a;transform:rotate(-90deg)">1400</div><div class="t" style="left:256px;top:220.4px;width:60px;height:12px;text-align:center;font-size:10.700px;color:#0a0a0a;-webkit-text-stroke:.2px #0a0a0a;transform:rotate(-90deg)">1600</div><div class="t" style="left:256px;top:165.2px;width:60px;height:12px;text-align:center;font-size:10.700px;color:#0a0a0a;-webkit-text-stroke:.2px #0a0a0a;transform:rotate(-90deg)">1800</div><div class="t" style="left:256px;top:110px;width:60px;height:12px;text-align:center;font-size:10.700px;color:#0a0a0a;-webkit-text-stroke:.2px #0a0a0a;transform:rotate(-90deg)">2000</div><div class="a" style="left:279px;top:589px;width:18px;height:1px;background:#222"></div><div class="a" style="left:539px;top:110px;width:288px;height:560px;background:#ffff80;border:1px solid #000"></div><div class="a" style="left:584.3px;top:153px;width:200.3px;height:474px;background:#f6f6d4"></div><div class="a" style="left:585.5px;top:155.4px;width:196.5px;height:469.6px;background:#b4b4b4"></div><div class="a" style="left:586.6px;top:156.5px;width:194.4px;height:467.3px;background:#ececec"></div><div class="a" style="left:589px;top:159px;width:189.2px;height:461.7px;background:#949494"></div><svg class="a" style="left:589px;top:159px" width="189.200" height="461.700" viewBox="0 0 189.200 461.700"><defs><pattern id="gkh" width="12.100" height="12" patternUnits="userSpaceOnUse"><path d="M1.500 10.500V2.500H10V8.500H4.500V5.500H7.500" fill="none" stroke="#b0b0b0" stroke-width="1.100"/></pattern><pattern id="gkv" width="12" height="12.100" patternUnits="userSpaceOnUse"><path d="M10.500 1.500H2.500V10H8.500V4.500H5.500V7.500" fill="none" stroke="#b0b0b0" stroke-width="1.100"/></pattern></defs><rect x="0" y="0" width="189.200" height="11.700" fill="url(#gkh)"/><g transform="translate(0 450)"><rect x="0" y="0" width="189.200" height="11.700" fill="url(#gkh)"/></g><rect x="0" y="12" width="11" height="438" fill="url(#gkv)"/><g transform="translate(178.200 0)"><rect x="0" y="12" width="11" height="438" fill="url(#gkv)"/></g><rect x=".5" y=".5" width="188.200" height="460.700" fill="none" stroke="#8c8c8c" stroke-width="1"/></svg><div class="a" style="left:600px;top:170.7px;width:167.3px;height:438.3px;background:#f0f0f0"></div><div class="a" style="left:603px;top:173px;width:161.2px;height:434px;background:#ffff80;border-top:1px solid #7e7e4c;border-bottom:1px solid #8e8e5c"></div><svg class="a" style="left:602px;top:172px" width="164" height="436" viewBox="602 172 164 436"><defs><filter id="b1" x="-20%" y="-20%" width="140%" height="140%"><feGaussianBlur stdDeviation="1.2"/></filter><filter id="b2" x="-30%" y="-30%" width="160%" height="160%"><feGaussianBlur stdDeviation="1.900"/></filter><filter id="b05" x="-10%" y="-10%" width="120%" height="120%"><feGaussianBlur stdDeviation=".5"/></filter><radialGradient id="gr" cx=".4" cy=".4" r=".65"><stop offset="0" stop-color="#fbfbfb"/><stop offset=".7" stop-color="#ececec"/><stop offset="1" stop-color="#c4c4c4"/></radialGradient><clipPath id="cL1"><path d="M672.0 341.0C669.2 340.3 664.2 338.7 660.0 336.0C655.8 333.3 650.3 329.0 647.0 325.0C643.7 321.0 641.7 316.3 640.0 312.0C638.3 307.7 638.5 303.5 637.0 299.0C635.5 294.5 632.8 288.7 631.0 285.0C629.2 281.3 627.8 279.2 626.0 277.0C624.2 274.8 620.7 274.5 620.0 272.0C619.3 269.5 619.8 264.5 622.0 262.0C624.2 259.5 629.2 258.3 633.0 257.0C636.8 255.7 641.8 253.7 645.0 254.0C648.2 254.3 650.0 258.3 652.0 259.0C654.0 259.7 655.2 256.5 657.0 258.0C658.8 259.5 661.3 266.2 663.0 268.0C664.7 269.8 666.3 271.7 667.0 269.0C667.7 266.3 666.2 256.8 667.0 252.0C667.8 247.2 669.8 243.3 672.0 240.0C674.2 236.7 677.3 234.7 680.0 232.0C682.7 229.3 685.3 226.2 688.0 224.0C690.7 221.8 693.3 221.0 696.0 219.0C698.7 217.0 701.3 214.0 704.0 212.0C706.7 210.0 709.3 208.5 712.0 207.0C714.7 205.5 717.2 204.2 720.0 203.0C722.8 201.8 726.0 200.8 729.0 200.0C732.0 199.2 735.2 199.0 738.0 198.0C740.8 197.0 744.0 193.2 746.0 194.0C748.0 194.8 749.3 199.8 750.0 203.0C750.7 206.2 750.5 209.8 750.0 213.0C749.5 216.2 747.5 219.2 747.0 222.0C746.5 224.8 747.8 227.3 747.0 230.0C746.2 232.7 743.0 235.2 742.0 238.0C741.0 240.8 742.3 244.3 741.0 247.0C739.7 249.7 735.3 251.3 734.0 254.0C732.7 256.7 734.7 260.3 733.0 263.0C731.3 265.7 725.8 267.5 724.0 270.0C722.2 272.5 724.0 275.7 722.0 278.0C720.0 280.3 714.7 282.0 712.0 284.0C709.3 286.0 705.7 289.3 706.0 290.0C706.3 290.7 711.2 288.3 714.0 288.0C716.8 287.7 720.0 287.5 723.0 288.0C726.0 288.5 729.2 289.7 732.0 291.0C734.8 292.3 737.5 294.2 740.0 296.0C742.5 297.8 747.0 300.3 747.0 302.0C747.0 303.7 741.8 304.3 740.0 306.0C738.2 307.7 737.7 310.3 736.0 312.0C734.3 313.7 731.3 313.8 730.0 316.0C728.7 318.2 729.7 322.8 728.0 325.0C726.3 327.2 722.2 327.0 720.0 329.0C717.8 331.0 717.3 335.0 715.0 337.0C712.7 339.0 708.8 339.0 706.0 341.0C703.2 343.0 700.7 348.0 698.0 349.0C695.3 350.0 692.5 347.7 690.0 347.0C687.5 346.3 685.2 346.2 683.0 345.0C680.8 343.8 678.8 340.7 677.0 340.0C675.2 339.3 674.8 341.7 672.0 341.0Z"/></clipPath><clipPath id="cL2"><path d="M703.0 419.0C701.2 416.7 698.8 413.2 697.0 410.0C695.2 406.8 693.0 403.7 692.0 400.0C691.0 396.3 690.5 391.7 691.0 388.0C691.5 384.3 693.5 380.8 695.0 378.0C696.5 375.2 698.5 373.2 700.0 371.0C701.5 368.8 702.3 365.5 704.0 365.0C705.7 364.5 708.5 366.2 710.0 368.0C711.5 369.8 712.2 372.7 713.0 376.0C713.8 379.3 714.2 385.3 715.0 388.0C715.8 390.7 716.7 393.0 718.0 392.0C719.3 391.0 721.0 385.3 723.0 382.0C725.0 378.7 727.8 375.0 730.0 372.0C732.2 369.0 734.0 366.7 736.0 364.0C738.0 361.3 740.2 358.3 742.0 356.0C743.8 353.7 745.3 351.7 747.0 350.0C748.7 348.3 750.5 345.2 752.0 346.0C753.5 346.8 755.2 351.7 756.0 355.0C756.8 358.3 757.2 362.3 757.0 366.0C756.8 369.7 755.3 373.7 755.0 377.0C754.7 380.3 756.0 383.3 755.0 386.0C754.0 388.7 750.7 390.7 749.0 393.0C747.3 395.3 747.0 398.0 745.0 400.0C743.0 402.0 739.5 403.7 737.0 405.0C734.5 406.3 729.8 407.7 730.0 408.0C730.2 408.3 735.3 407.0 738.0 407.0C740.7 407.0 743.5 407.2 746.0 408.0C748.5 408.8 751.0 410.3 753.0 412.0C755.0 413.7 756.7 415.5 758.0 418.0C759.3 420.5 761.3 424.3 761.0 427.0C760.7 429.7 757.8 433.2 756.0 434.0C754.2 434.8 751.8 433.2 750.0 432.0C748.2 430.8 747.0 427.3 745.0 427.0C743.0 426.7 740.0 429.0 738.0 430.0C736.0 431.0 735.0 432.8 733.0 433.0C731.0 433.2 728.2 431.2 726.0 431.0C723.8 430.8 722.0 432.7 720.0 432.0C718.0 431.3 716.0 428.3 714.0 427.0C712.0 425.7 709.8 425.3 708.0 424.0C706.2 422.7 704.8 421.3 703.0 419.0Z"/></clipPath><clipPath id="cL3"><path d="M668.0 445.0C667.7 442.2 665.5 437.8 664.0 434.0C662.5 430.2 661.0 425.7 659.0 422.0C657.0 418.3 654.3 414.7 652.0 412.0C649.7 409.3 647.5 407.3 645.0 406.0C642.5 404.7 639.7 404.2 637.0 404.0C634.3 403.8 631.5 404.2 629.0 405.0C626.5 405.8 622.3 407.5 622.0 409.0C621.7 410.5 625.0 412.8 627.0 414.0C629.0 415.2 634.5 415.7 634.0 416.0C633.5 416.3 627.2 415.7 624.0 416.0C620.8 416.3 617.5 416.8 615.0 418.0C612.5 419.2 610.5 420.8 609.0 423.0C607.5 425.2 606.3 428.2 606.0 431.0C605.7 433.8 606.2 439.5 607.0 440.0C607.8 440.5 609.5 435.3 611.0 434.0C612.5 432.7 614.2 432.0 616.0 432.0C617.8 432.0 621.8 433.0 622.0 434.0C622.2 435.0 617.2 436.3 617.0 438.0C616.8 439.7 619.3 442.7 621.0 444.0C622.7 445.3 626.8 444.8 627.0 446.0C627.2 447.2 621.7 449.2 622.0 451.0C622.3 452.8 626.5 456.2 629.0 457.0C631.5 457.8 634.8 455.0 637.0 456.0C639.2 457.0 639.8 461.7 642.0 463.0C644.2 464.3 647.5 464.3 650.0 464.0C652.5 463.7 654.8 462.2 657.0 461.0C659.2 459.8 661.5 458.7 663.0 457.0C664.5 455.3 665.2 453.0 666.0 451.0C666.8 449.0 668.3 447.8 668.0 445.0Z"/></clipPath><clipPath id="cL4"><path d="M658.0 517.0C658.3 514.0 659.0 509.0 660.0 506.0C661.0 503.0 662.3 501.0 664.0 499.0C665.7 497.0 668.0 495.8 670.0 494.0C672.0 492.2 674.3 490.3 676.0 488.0C677.7 485.7 679.5 482.3 680.0 480.0C680.5 477.7 680.3 475.3 679.0 474.0C677.7 472.7 674.5 472.0 672.0 472.0C669.5 472.0 666.5 472.7 664.0 474.0C661.5 475.3 659.0 477.7 657.0 480.0C655.0 482.3 653.2 485.3 652.0 488.0C650.8 490.7 650.8 495.8 650.0 496.0C649.2 496.2 648.2 491.7 647.0 489.0C645.8 486.3 644.2 482.5 643.0 480.0C641.8 477.5 641.2 473.2 640.0 474.0C638.8 474.8 637.5 484.7 636.0 485.0C634.5 485.3 632.7 478.8 631.0 476.0C629.3 473.2 627.7 470.2 626.0 468.0C624.3 465.8 622.8 462.7 621.0 463.0C619.2 463.3 616.3 467.2 615.0 470.0C613.7 472.8 613.5 476.7 613.0 480.0C612.5 483.3 611.8 486.7 612.0 490.0C612.2 493.3 613.0 497.0 614.0 500.0C615.0 503.0 616.3 506.3 618.0 508.0C619.7 509.7 622.2 509.3 624.0 510.0C625.8 510.7 629.2 510.7 629.0 512.0C628.8 513.3 624.8 515.7 623.0 518.0C621.2 520.3 619.3 523.0 618.0 526.0C616.7 529.0 616.0 532.3 615.0 536.0C614.0 539.7 611.3 545.5 612.0 548.0C612.7 550.5 616.7 551.3 619.0 551.0C621.3 550.7 623.8 548.0 626.0 546.0C628.2 544.0 630.7 539.0 632.0 539.0C633.3 539.0 633.3 543.5 634.0 546.0C634.7 548.5 634.8 553.8 636.0 554.0C637.2 554.2 639.3 549.5 641.0 547.0C642.7 544.5 644.5 538.8 646.0 539.0C647.5 539.2 648.7 547.7 650.0 548.0C651.3 548.3 652.8 543.7 654.0 541.0C655.2 538.3 656.3 534.8 657.0 532.0C657.7 529.2 657.8 526.5 658.0 524.0C658.2 521.5 657.7 520.0 658.0 517.0Z"/></clipPath><clipPath id="cL5"><path d="M697.0 538.0C698.5 535.8 698.5 529.8 700.0 527.0C701.5 524.2 703.7 522.7 706.0 521.0C708.3 519.3 711.3 518.2 714.0 517.0C716.7 515.8 719.3 515.0 722.0 514.0C724.7 513.0 727.8 510.8 730.0 511.0C732.2 511.2 733.0 514.3 735.0 515.0C737.0 515.7 739.7 515.3 742.0 515.0C744.3 514.7 746.7 513.3 749.0 513.0C751.3 512.7 754.5 511.8 756.0 513.0C757.5 514.2 758.5 517.7 758.0 520.0C757.5 522.3 754.3 525.0 753.0 527.0C751.7 529.0 750.0 530.2 750.0 532.0C750.0 533.8 753.2 536.2 753.0 538.0C752.8 539.8 751.0 541.8 749.0 543.0C747.0 544.2 743.7 544.5 741.0 545.0C738.3 545.5 735.5 546.0 733.0 546.0C730.5 546.0 726.0 544.3 726.0 545.0C726.0 545.7 730.8 548.2 733.0 550.0C735.2 551.8 737.3 553.8 739.0 556.0C740.7 558.2 742.2 560.3 743.0 563.0C743.8 565.7 744.2 568.8 744.0 572.0C743.8 575.2 743.0 579.0 742.0 582.0C741.0 585.0 739.7 587.7 738.0 590.0C736.3 592.3 734.3 594.3 732.0 596.0C729.7 597.7 727.2 599.3 724.0 600.0C720.8 600.7 716.5 600.3 713.0 600.0C709.5 599.7 703.7 599.0 703.0 598.0C702.3 597.0 707.3 595.5 709.0 594.0C710.7 592.5 712.8 590.8 713.0 589.0C713.2 587.2 710.8 585.0 710.0 583.0C709.2 581.0 709.2 577.3 708.0 577.0C706.8 576.7 704.8 580.0 703.0 581.0C701.2 582.0 699.2 583.0 697.0 583.0C694.8 583.0 692.8 582.0 690.0 581.0C687.2 580.0 680.7 578.5 680.0 577.0C679.3 575.5 684.5 573.8 686.0 572.0C687.5 570.2 689.0 568.0 689.0 566.0C689.0 564.0 687.2 562.2 686.0 560.0C684.8 557.8 683.0 555.3 682.0 553.0C681.0 550.7 679.5 547.8 680.0 546.0C680.5 544.2 683.2 543.0 685.0 542.0C686.8 541.0 689.0 540.7 691.0 540.0C693.0 539.3 695.5 540.2 697.0 538.0Z"/></clipPath></defs><path d="M686.0 470.0C687.2 471.7 687.3 477.7 688.0 482.0C688.7 486.3 688.7 494.7 690.0 496.0C691.3 497.3 694.5 490.3 696.0 490.0C697.5 489.7 699.7 491.5 699.0 494.0C698.3 496.5 694.2 500.7 692.0 505.0C689.8 509.3 687.7 515.5 686.0 520.0C684.3 524.5 682.3 529.0 682.0 532.0C681.7 535.0 685.0 536.3 684.0 538.0C683.0 539.7 678.3 540.0 676.0 542.0C673.7 544.0 672.2 546.7 670.0 550.0C667.8 553.3 665.2 557.7 663.0 562.0C660.8 566.3 659.0 571.5 657.0 576.0C655.0 580.5 653.3 585.5 651.0 589.0C648.7 592.5 646.0 596.0 643.0 597.0C640.0 598.0 635.3 596.8 633.0 595.0C630.7 593.2 629.3 589.2 629.0 586.0C628.7 582.8 629.2 579.7 631.0 576.0C632.8 572.3 636.5 568.3 640.0 564.0C643.5 559.7 648.3 554.7 652.0 550.0C655.7 545.3 658.8 541.0 662.0 536.0C665.2 531.0 668.2 526.0 671.0 520.0C673.8 514.0 677.3 506.0 679.0 500.0C680.7 494.0 680.7 488.7 681.0 484.0C681.3 479.3 680.2 474.3 681.0 472.0C681.8 469.7 684.8 468.3 686.0 470.0Z" fill="#efefef" stroke="#6e6e58" stroke-width=".8"/><path d="M672 338C673 360 674 385 676 404" fill="none" stroke="#7a7a66" stroke-width="5.600"/><path d="M672 338C673 360 674 385 676 404" fill="none" stroke="#e9e9e9" stroke-width="4.200"/><path d="M677 405C660 392 647 380 647 367C647 353 664 352 671 364" fill="none" stroke="#8a8a70" stroke-width="7"/><path d="M677 405C660 392 647 380 647 367C647 353 664 352 671 364" fill="none" stroke="#d8d8d8" stroke-width="5.200"/><path d="M677 405C660 392 647 380 647 367C647 353 664 352 671 364" fill="none" stroke="#f0f0f0" stroke-width="1.800"/><path d="M658 515C662 525 664 533 666 541" fill="none" stroke="#e6e6e6" stroke-width="3.400"/><path d="M682 539C688 536 693 536 698 538" fill="none" stroke="#e6e6e6" stroke-width="3"/><path d="M676 402C680 420 684 450 685 472" fill="none" stroke="#e4e4e4" stroke-width="4"/><path d="M700 478C706 488 716 493 728 492C738 490 742 480 742 468C742 460 746 457 749 456" fill="none" stroke="#9a9a78" stroke-width="4.200"/><path d="M700 478C706 488 716 493 728 492C738 490 742 480 742 468C742 460 746 457 749 456" fill="none" stroke="#ededed" stroke-width="3"/><path d="M740 480C736 486 724 486 721 478C719 470 727 465 733 469C738 473 733 480 728 478" fill="none" stroke="#9a9a78" stroke-width="3.600"/><path d="M740 480C736 486 724 486 721 478C719 470 727 465 733 469C738 473 733 480 728 478" fill="none" stroke="#eeeeee" stroke-width="2.400"/><g clip-path="url(#cL1)"><path d="M672.0 341.0C669.2 340.3 664.2 338.7 660.0 336.0C655.8 333.3 650.3 329.0 647.0 325.0C643.7 321.0 641.7 316.3 640.0 312.0C638.3 307.7 638.5 303.5 637.0 299.0C635.5 294.5 632.8 288.7 631.0 285.0C629.2 281.3 627.8 279.2 626.0 277.0C624.2 274.8 620.7 274.5 620.0 272.0C619.3 269.5 619.8 264.5 622.0 262.0C624.2 259.5 629.2 258.3 633.0 257.0C636.8 255.7 641.8 253.7 645.0 254.0C648.2 254.3 650.0 258.3 652.0 259.0C654.0 259.7 655.2 256.5 657.0 258.0C658.8 259.5 661.3 266.2 663.0 268.0C664.7 269.8 666.3 271.7 667.0 269.0C667.7 266.3 666.2 256.8 667.0 252.0C667.8 247.2 669.8 243.3 672.0 240.0C674.2 236.7 677.3 234.7 680.0 232.0C682.7 229.3 685.3 226.2 688.0 224.0C690.7 221.8 693.3 221.0 696.0 219.0C698.7 217.0 701.3 214.0 704.0 212.0C706.7 210.0 709.3 208.5 712.0 207.0C714.7 205.5 717.2 204.2 720.0 203.0C722.8 201.8 726.0 200.8 729.0 200.0C732.0 199.2 735.2 199.0 738.0 198.0C740.8 197.0 744.0 193.2 746.0 194.0C748.0 194.8 749.3 199.8 750.0 203.0C750.7 206.2 750.5 209.8 750.0 213.0C749.5 216.2 747.5 219.2 747.0 222.0C746.5 224.8 747.8 227.3 747.0 230.0C746.2 232.7 743.0 235.2 742.0 238.0C741.0 240.8 742.3 244.3 741.0 247.0C739.7 249.7 735.3 251.3 734.0 254.0C732.7 256.7 734.7 260.3 733.0 263.0C731.3 265.7 725.8 267.5 724.0 270.0C722.2 272.5 724.0 275.7 722.0 278.0C720.0 280.3 714.7 282.0 712.0 284.0C709.3 286.0 705.7 289.3 706.0 290.0C706.3 290.7 711.2 288.3 714.0 288.0C716.8 287.7 720.0 287.5 723.0 288.0C726.0 288.5 729.2 289.7 732.0 291.0C734.8 292.3 737.5 294.2 740.0 296.0C742.5 297.8 747.0 300.3 747.0 302.0C747.0 303.7 741.8 304.3 740.0 306.0C738.2 307.7 737.7 310.3 736.0 312.0C734.3 313.7 731.3 313.8 730.0 316.0C728.7 318.2 729.7 322.8 728.0 325.0C726.3 327.2 722.2 327.0 720.0 329.0C717.8 331.0 717.3 335.0 715.0 337.0C712.7 339.0 708.8 339.0 706.0 341.0C703.2 343.0 700.7 348.0 698.0 349.0C695.3 350.0 692.5 347.7 690.0 347.0C687.5 346.3 685.2 346.2 683.0 345.0C680.8 343.8 678.8 340.7 677.0 340.0C675.2 339.3 674.8 341.7 672.0 341.0Z" fill="#cecece"/><path d="M672.0 340.0C672.3 335.8 672.0 325.0 674.0 315.0C676.0 305.0 679.7 291.7 684.0 280.0C688.3 268.3 693.7 255.3 700.0 245.0C706.3 234.7 714.7 225.5 722.0 218.0C729.3 210.5 740.3 203.0 744.0 200.0" fill="none" stroke="#999999" stroke-width="11" stroke-linecap="round" filter="url(#b2)"/><path d="M671.0 338.0C669.8 333.3 667.5 318.8 664.0 310.0C660.5 301.2 654.7 291.7 650.0 285.0C645.3 278.3 640.3 273.2 636.0 270.0C631.7 266.8 626.0 266.7 624.0 266.0" fill="none" stroke="#999999" stroke-width="11" stroke-linecap="round" filter="url(#b2)"/><path d="M674.0 335.0C676.7 332.5 683.7 324.5 690.0 320.0C696.3 315.5 704.7 311.2 712.0 308.0C719.3 304.8 728.7 302.0 734.0 301.0C739.3 300.0 742.3 301.8 744.0 302.0" fill="none" stroke="#999999" stroke-width="11" stroke-linecap="round" filter="url(#b2)"/><path d="M673.3 323.3Q687.2 318.0 701.7 304.6M674.0 315.0Q662.9 305.2 654.0 287.5M676.0 308.0Q690.6 305.5 707.5 295.2M678.0 301.0Q666.9 291.2 658.0 273.5M680.0 294.0Q694.6 291.5 711.5 281.2M682.0 287.0Q673.7 279.6 667.0 266.4M684.0 280.0Q698.8 279.8 717.1 272.1M687.2 273.0Q677.7 261.6 671.5 242.8M690.4 266.0Q705.2 265.8 723.5 258.1M693.6 259.0Q685.2 248.9 679.7 232.3M696.8 252.0Q711.6 251.8 729.9 244.1M700.0 245.0Q695.2 234.9 694.3 220.1M704.4 239.6Q718.8 243.1 738.4 240.3M708.8 234.2Q704.6 225.3 703.8 212.2M713.2 228.8Q727.5 232.3 747.0 229.5M717.6 223.4Q714.3 216.4 713.7 206.2M722.0 218.0Q732.1 222.8 747.0 223.6M727.5 213.5Q726.2 208.0 727.2 200.6M733.0 209.0Q739.9 212.2 750.0 212.8M738.5 204.5Q737.8 201.7 738.3 197.8M669.2 331.0Q657.5 328.6 644.2 319.9M667.5 324.0Q669.0 322.8 670.2 320.5M665.8 317.0Q652.9 314.4 638.3 304.8M664.0 310.0Q672.6 297.9 677.1 278.6M660.5 303.8Q650.3 304.4 637.3 300.2M657.0 297.5Q665.6 285.4 670.1 266.1M653.5 291.2Q644.1 291.9 632.3 288.0M650.0 285.0Q654.3 274.1 654.2 258.6M645.3 280.0Q638.4 282.2 628.8 281.5M640.7 275.0Q644.0 266.5 643.9 254.3M636.0 270.0Q632.3 273.9 625.8 276.8M679.3 330.0Q677.9 325.5 678.4 319.3M684.7 325.0Q698.5 330.4 718.3 330.2M690.0 320.0Q689.2 305.4 695.5 286.9M697.3 316.0Q707.4 323.3 723.4 327.3M704.7 312.0Q704.1 302.0 708.4 289.4M712.0 308.0Q718.2 314.6 729.2 319.7M719.3 305.7Q720.4 297.9 725.6 288.9M726.7 303.3Q730.4 307.3 737.0 310.4M734.0 301.0Q735.7 298.2 739.2 295.5" fill="none" stroke="#ededed" stroke-width="4.500" stroke-linecap="round" filter="url(#b2)"/><path d="M672.7 331.7Q676.1 330.4 679.6 327.1M673.3 323.3Q671.7 322.4 670.1 320.3M674.0 315.0Q688.6 312.5 705.5 302.2M676.0 308.0Q664.9 298.2 656.0 280.5M678.0 301.0Q691.3 298.8 706.6 289.4M680.0 294.0Q668.9 284.2 660.0 266.5M682.0 287.0Q696.6 284.5 713.5 274.2M684.0 280.0Q674.5 268.6 668.3 249.8M687.2 273.0Q702.0 272.8 720.3 265.1M690.4 266.0Q681.2 255.0 675.2 236.8M693.6 259.0Q708.4 258.8 726.7 251.1M696.8 252.0Q689.2 242.9 684.2 227.8M700.0 245.0Q714.4 248.5 734.0 245.7M704.4 239.6Q699.9 230.2 699.1 216.3M708.8 234.2Q723.2 237.7 742.8 234.9M713.2 228.8Q709.4 220.8 708.7 209.1M717.6 223.4Q730.1 226.4 747.0 224.0M722.0 218.0Q720.4 211.4 721.6 202.5M727.5 213.5Q735.9 217.5 748.3 218.2M733.0 209.0Q732.0 204.8 732.8 199.2M738.5 204.5Q743.2 206.7 750.0 207.1M669.2 331.0Q670.1 330.3 670.9 328.9M667.5 324.0Q654.6 321.4 639.9 311.8M665.8 317.0Q668.5 314.7 670.8 310.5M664.0 310.0Q652.8 310.7 638.6 306.1M660.5 303.8Q669.1 291.6 673.6 272.4M657.0 297.5Q647.3 298.1 634.9 294.1M653.5 291.2Q659.8 282.3 663.2 268.1M650.0 285.0Q642.3 287.4 631.7 286.6M645.3 280.0Q649.1 270.5 649.0 256.8M640.7 275.0Q634.2 277.0 625.2 276.4M636.0 270.0Q635.3 264.3 631.6 257.6M679.3 330.0Q693.2 335.4 712.9 335.2M684.7 325.0Q682.7 318.7 683.3 309.9M690.0 320.0Q700.8 327.8 718.0 332.1M697.3 316.0Q696.5 301.2 702.9 282.5M704.7 312.0Q713.9 318.7 728.6 322.3M712.0 308.0Q713.3 298.8 719.4 288.0M719.3 305.7Q724.0 310.7 732.3 314.5M726.7 303.3Q727.5 297.5 731.3 290.8M734.0 301.0Q735.3 304.5 738.5 308.2" fill="none" stroke="#8e8e8e" stroke-width="2.6" stroke-linecap="round" filter="url(#b1)" opacity="0.75"/><circle cx="623" cy="267" r="5" fill="#707070" filter="url(#b2)"/><circle cx="745" cy="200" r="5" fill="#707070" filter="url(#b2)"/><circle cx="744" cy="303" r="4" fill="#707070" filter="url(#b2)"/><circle cx="745" cy="230" r="4" fill="#707070" filter="url(#b2)"/><circle cx="640" cy="300" r="4" fill="#707070" filter="url(#b2)"/><path d="M672.0 340.0C672.3 335.8 672.0 325.0 674.0 315.0C676.0 305.0 679.7 291.7 684.0 280.0C688.3 268.3 693.7 255.3 700.0 245.0C706.3 234.7 714.7 225.5 722.0 218.0C729.3 210.5 740.3 203.0 744.0 200.0" fill="none" stroke="#fbfbfb" stroke-width="2" stroke-linecap="round" filter="url(#b05)"/><path d="M671.0 338.0C669.8 333.3 667.5 318.8 664.0 310.0C660.5 301.2 654.7 291.7 650.0 285.0C645.3 278.3 640.3 273.2 636.0 270.0C631.7 266.8 626.0 266.7 624.0 266.0" fill="none" stroke="#fbfbfb" stroke-width="2" stroke-linecap="round" filter="url(#b05)"/><path d="M674.0 335.0C676.7 332.5 683.7 324.5 690.0 320.0C696.3 315.5 704.7 311.2 712.0 308.0C719.3 304.8 728.7 302.0 734.0 301.0C739.3 300.0 742.3 301.8 744.0 302.0" fill="none" stroke="#fbfbfb" stroke-width="2" stroke-linecap="round" filter="url(#b05)"/><path d="M709.2 290.6L696.4 293.6L707.6 286.7ZM676.2 234.0L680.3 246.5L672.4 236.0ZM685.2 225.0L689.3 237.5L681.4 227.0ZM700.7 213.9L701.5 227.0L696.6 214.8ZM710.3 206.6L711.0 218.9L706.2 207.6ZM749.0 226.1L736.0 223.8L749.0 221.9ZM723.7 200.4L721.8 210.2L719.5 200.5ZM749.8 220.7L737.9 215.8L750.7 216.6ZM734.8 197.1L732.9 204.1L730.6 197.2ZM751.5 209.6L744.2 205.8L752.4 205.5ZM639.0 309.0L650.0 316.2L637.3 312.9ZM637.0 303.7L649.5 307.8L636.3 307.9ZM633.2 291.7L645.8 295.8L632.6 295.9ZM665.9 267.0L659.0 278.2L662.1 265.4ZM629.5 284.7L640.8 285.8L629.9 288.9ZM651.4 255.2L647.3 267.7L647.2 254.5ZM623.1 274.4L632.9 275.7L623.4 278.6ZM632.9 255.0L633.8 263.8L629.0 256.5ZM719.0 334.9L707.9 327.8L720.7 331.0ZM729.6 325.1L718.5 318.0L731.3 321.2ZM722.1 286.9L715.7 298.0L718.1 285.4ZM732.7 317.4L725.8 310.1L735.1 313.9ZM734.0 289.6L729.0 297.1L730.1 288.2ZM737.8 311.0L736.3 304.6L741.4 308.8Z" fill="#ffff82" filter="url(#b05)"/><ellipse cx="703" cy="213" rx="2" ry="4" fill="#fdfd86" transform="rotate(30 703 213)" filter="url(#b05)"/><ellipse cx="692" cy="228" rx="2" ry="4" fill="#fdfd86" transform="rotate(30 692 228)" filter="url(#b05)"/><ellipse cx="679" cy="249" rx="2" ry="4" fill="#fdfd86" transform="rotate(25 679 249)" filter="url(#b05)"/><ellipse cx="723" cy="211" rx="2" ry="3" fill="#fdfd86" transform="rotate(30 723 211)" filter="url(#b05)"/><ellipse cx="738" cy="229" rx="3" ry="2" fill="#fdfd86" transform="rotate(0 738 229)" filter="url(#b05)"/><ellipse cx="728" cy="249" rx="4" ry="2" fill="#fdfd86" transform="rotate(-10 728 249)" filter="url(#b05)"/><ellipse cx="718" cy="269" rx="5" ry="2.5" fill="#fdfd86" transform="rotate(-15 718 269)" filter="url(#b05)"/><ellipse cx="712" cy="293" rx="5" ry="2" fill="#fdfd86" transform="rotate(-30 712 293)" filter="url(#b05)"/><ellipse cx="669" cy="278" rx="2" ry="5" fill="#fdfd86" transform="rotate(-10 669 278)" filter="url(#b05)"/><ellipse cx="643" cy="290" rx="2" ry="2" fill="#fdfd86" transform="rotate(0 643 290)" filter="url(#b05)"/><ellipse cx="730" cy="315" rx="3" ry="1.5" fill="#fdfd86" transform="rotate(-20 730 315)" filter="url(#b05)"/><ellipse cx="722" cy="327" rx="3" ry="1.5" fill="#fdfd86" transform="rotate(-20 722 327)" filter="url(#b05)"/></g><g clip-path="url(#cL2)"><path d="M703.0 419.0C701.2 416.7 698.8 413.2 697.0 410.0C695.2 406.8 693.0 403.7 692.0 400.0C691.0 396.3 690.5 391.7 691.0 388.0C691.5 384.3 693.5 380.8 695.0 378.0C696.5 375.2 698.5 373.2 700.0 371.0C701.5 368.8 702.3 365.5 704.0 365.0C705.7 364.5 708.5 366.2 710.0 368.0C711.5 369.8 712.2 372.7 713.0 376.0C713.8 379.3 714.2 385.3 715.0 388.0C715.8 390.7 716.7 393.0 718.0 392.0C719.3 391.0 721.0 385.3 723.0 382.0C725.0 378.7 727.8 375.0 730.0 372.0C732.2 369.0 734.0 366.7 736.0 364.0C738.0 361.3 740.2 358.3 742.0 356.0C743.8 353.7 745.3 351.7 747.0 350.0C748.7 348.3 750.5 345.2 752.0 346.0C753.5 346.8 755.2 351.7 756.0 355.0C756.8 358.3 757.2 362.3 757.0 366.0C756.8 369.7 755.3 373.7 755.0 377.0C754.7 380.3 756.0 383.3 755.0 386.0C754.0 388.7 750.7 390.7 749.0 393.0C747.3 395.3 747.0 398.0 745.0 400.0C743.0 402.0 739.5 403.7 737.0 405.0C734.5 406.3 729.8 407.7 730.0 408.0C730.2 408.3 735.3 407.0 738.0 407.0C740.7 407.0 743.5 407.2 746.0 408.0C748.5 408.8 751.0 410.3 753.0 412.0C755.0 413.7 756.7 415.5 758.0 418.0C759.3 420.5 761.3 424.3 761.0 427.0C760.7 429.7 757.8 433.2 756.0 434.0C754.2 434.8 751.8 433.2 750.0 432.0C748.2 430.8 747.0 427.3 745.0 427.0C743.0 426.7 740.0 429.0 738.0 430.0C736.0 431.0 735.0 432.8 733.0 433.0C731.0 433.2 728.2 431.2 726.0 431.0C723.8 430.8 722.0 432.7 720.0 432.0C718.0 431.3 716.0 428.3 714.0 427.0C712.0 425.7 709.8 425.3 708.0 424.0C706.2 422.7 704.8 421.3 703.0 419.0Z" fill="#cecece"/><path d="M703.0 418.0C705.2 415.0 710.8 406.7 716.0 400.0C721.2 393.3 728.8 384.7 734.0 378.0C739.2 371.3 744.0 364.7 747.0 360.0C750.0 355.3 751.2 351.7 752.0 350.0" fill="none" stroke="#999999" stroke-width="11" stroke-linecap="round" filter="url(#b2)"/><path d="M703.0 418.0C702.5 415.0 700.2 406.0 700.0 400.0C699.8 394.0 701.2 387.2 702.0 382.0C702.8 376.8 704.5 371.2 705.0 369.0" fill="none" stroke="#999999" stroke-width="11" stroke-linecap="round" filter="url(#b2)"/><path d="M704.0 418.0C707.0 417.3 715.7 414.3 722.0 414.0C728.3 413.7 736.3 414.3 742.0 416.0C747.7 417.7 753.7 422.7 756.0 424.0" fill="none" stroke="#999999" stroke-width="11" stroke-linecap="round" filter="url(#b2)"/><path d="M707.3 412.0Q705.4 408.4 704.7 402.9M711.7 406.0Q722.5 408.0 736.9 405.0M716.0 400.0Q709.8 386.8 708.6 367.3M720.5 394.5Q732.1 397.3 747.8 395.1M725.0 389.0Q723.6 386.0 723.3 381.5M729.5 383.5Q740.3 386.2 755.0 384.1M734.0 378.0Q732.2 374.7 731.6 369.8M738.3 372.0Q745.9 373.4 756.0 371.3M742.7 366.0Q741.0 362.9 740.4 358.1M747.0 360.0Q751.1 360.1 756.3 358.1M701.5 409.0Q698.2 408.1 694.6 405.3M700.0 400.0Q706.6 397.7 713.6 391.6M701.0 391.0Q696.8 388.4 692.9 383.1M702.0 382.0Q707.2 380.8 713.1 376.8M703.5 375.5Q701.6 374.0 699.9 371.1M713.0 416.0Q714.3 410.2 718.9 403.6M722.0 414.0Q725.2 423.0 733.7 432.6M728.7 414.7Q731.0 410.9 735.7 407.3M735.3 415.3Q737.5 421.4 743.2 427.8M742.0 416.0Q746.1 413.2 752.5 411.7M749.0 420.0Q748.6 425.4 750.8 432.3" fill="none" stroke="#ededed" stroke-width="4.500" stroke-linecap="round" filter="url(#b2)"/><path d="M707.3 412.0Q721.9 414.7 741.3 410.7M711.7 406.0Q709.0 401.1 708.1 393.7M716.0 400.0Q727.9 402.9 744.0 400.6M720.5 394.5Q719.5 392.4 719.3 389.3M725.0 389.0Q736.4 391.8 751.9 389.6M729.5 383.5Q727.9 380.2 727.7 375.3M734.0 378.0Q743.0 379.6 755.0 377.2M738.3 372.0Q736.6 368.8 736.0 364.0M742.7 366.0Q748.8 367.1 757.0 365.5M747.0 360.0Q745.1 357.6 744.0 353.6M701.5 409.0Q710.0 403.0 717.6 391.5M700.0 400.0Q695.5 397.2 691.3 391.5M701.0 391.0Q707.4 388.8 714.1 382.9M702.0 382.0Q699.2 379.7 696.8 375.5M703.5 375.5Q707.2 374.7 711.4 371.8M713.0 416.0Q720.1 425.1 733.4 432.8M722.0 414.0Q729.7 401.3 745.5 389.4M728.7 414.7Q731.3 422.1 738.3 429.9M735.3 415.3Q737.8 411.3 742.7 407.6M742.0 416.0Q741.6 421.1 743.7 427.6M749.0 420.0Q752.1 417.9 757.0 416.7" fill="none" stroke="#8e8e8e" stroke-width="3.2" stroke-linecap="round" filter="url(#b2)" opacity="0.5"/><circle cx="704" cy="368" r="4" fill="#707070" filter="url(#b2)"/><circle cx="752" cy="350" r="5" fill="#707070" filter="url(#b2)"/><circle cx="758" cy="428" r="4" fill="#707070" filter="url(#b2)"/><circle cx="700" cy="395" r="4" fill="#707070" filter="url(#b2)"/><circle cx="735" cy="428" r="4" fill="#707070" filter="url(#b2)"/><path d="M703.0 418.0C705.2 415.0 710.8 406.7 716.0 400.0C721.2 393.3 728.8 384.7 734.0 378.0C739.2 371.3 744.0 364.7 747.0 360.0C750.0 355.3 751.2 351.7 752.0 350.0" fill="none" stroke="#f4f4f4" stroke-width="1.5" stroke-linecap="round" filter="url(#b05)"/><path d="M703.0 418.0C702.5 415.0 700.2 406.0 700.0 400.0C699.8 394.0 701.2 387.2 702.0 382.0C702.8 376.8 704.5 371.2 705.0 369.0" fill="none" stroke="#f4f4f4" stroke-width="1.5" stroke-linecap="round" filter="url(#b05)"/><path d="M704.0 418.0C707.0 417.3 715.7 414.3 722.0 414.0C728.3 413.7 736.3 414.3 742.0 416.0C747.7 417.7 753.7 422.7 756.0 424.0" fill="none" stroke="#f4f4f4" stroke-width="1.5" stroke-linecap="round" filter="url(#b05)"/><path d="M745.9 402.8L733.0 400.4L746.0 398.6ZM729.3 372.9L728.6 379.4L725.2 373.9ZM759.0 367.5L749.8 365.7L758.9 363.3ZM717.0 383.6L707.6 386.9L714.7 380.1ZM737.6 432.7L733.5 422.3L741.1 430.4ZM759.6 417.9L753.0 418.4L758.0 414.0Z" fill="#ffff82" filter="url(#b05)"/><ellipse cx="722" cy="386" rx="2" ry="5" fill="#fdfd86" transform="rotate(30 722 386)" filter="url(#b05)"/><ellipse cx="741" cy="372" rx="2" ry="4" fill="#fdfd86" transform="rotate(35 741 372)" filter="url(#b05)"/><ellipse cx="747" cy="392" rx="3" ry="2" fill="#fdfd86" transform="rotate(-30 747 392)" filter="url(#b05)"/><ellipse cx="712" cy="384" rx="1.5" ry="4" fill="#fdfd86" transform="rotate(0 712 384)" filter="url(#b05)"/><ellipse cx="748" cy="414" rx="3" ry="1.5" fill="#fdfd86" transform="rotate(20 748 414)" filter="url(#b05)"/></g><g clip-path="url(#cL3)"><path d="M668.0 445.0C667.7 442.2 665.5 437.8 664.0 434.0C662.5 430.2 661.0 425.7 659.0 422.0C657.0 418.3 654.3 414.7 652.0 412.0C649.7 409.3 647.5 407.3 645.0 406.0C642.5 404.7 639.7 404.2 637.0 404.0C634.3 403.8 631.5 404.2 629.0 405.0C626.5 405.8 622.3 407.5 622.0 409.0C621.7 410.5 625.0 412.8 627.0 414.0C629.0 415.2 634.5 415.7 634.0 416.0C633.5 416.3 627.2 415.7 624.0 416.0C620.8 416.3 617.5 416.8 615.0 418.0C612.5 419.2 610.5 420.8 609.0 423.0C607.5 425.2 606.3 428.2 606.0 431.0C605.7 433.8 606.2 439.5 607.0 440.0C607.8 440.5 609.5 435.3 611.0 434.0C612.5 432.7 614.2 432.0 616.0 432.0C617.8 432.0 621.8 433.0 622.0 434.0C622.2 435.0 617.2 436.3 617.0 438.0C616.8 439.7 619.3 442.7 621.0 444.0C622.7 445.3 626.8 444.8 627.0 446.0C627.2 447.2 621.7 449.2 622.0 451.0C622.3 452.8 626.5 456.2 629.0 457.0C631.5 457.8 634.8 455.0 637.0 456.0C639.2 457.0 639.8 461.7 642.0 463.0C644.2 464.3 647.5 464.3 650.0 464.0C652.5 463.7 654.8 462.2 657.0 461.0C659.2 459.8 661.5 458.7 663.0 457.0C664.5 455.3 665.2 453.0 666.0 451.0C666.8 449.0 668.3 447.8 668.0 445.0Z" fill="#cecece"/><path d="M668.0 444.0C666.0 440.7 660.3 429.7 656.0 424.0C651.7 418.3 647.0 412.7 642.0 410.0C637.0 407.3 628.7 408.3 626.0 408.0" fill="none" stroke="#999999" stroke-width="11" stroke-linecap="round" filter="url(#b2)"/><path d="M667.0 444.0C663.3 441.7 652.2 433.3 645.0 430.0C637.8 426.7 630.0 424.0 624.0 424.0C618.0 424.0 611.5 429.0 609.0 430.0" fill="none" stroke="#999999" stroke-width="11" stroke-linecap="round" filter="url(#b2)"/><path d="M667.0 446.0C664.2 447.0 655.5 451.0 650.0 452.0C644.5 453.0 636.7 452.0 634.0 452.0" fill="none" stroke="#999999" stroke-width="11" stroke-linecap="round" filter="url(#b2)"/><path d="M664.0 437.3Q662.3 437.5 660.1 436.9M660.0 430.7Q660.8 429.4 661.3 427.4M656.0 424.0Q652.1 425.4 646.6 425.2M651.3 419.3Q652.4 416.4 652.2 412.3M646.7 414.7Q633.2 419.4 614.2 418.7M642.0 410.0Q641.1 407.3 638.7 404.4M634.0 409.0Q632.2 411.8 628.5 414.4M661.5 440.5Q648.9 448.4 629.5 451.9M656.0 437.0Q656.3 434.4 655.4 431.0M650.5 433.5Q638.9 440.8 621.0 444.0M645.0 430.0Q644.3 426.0 641.5 421.3M638.0 428.0Q631.3 435.5 619.4 441.6M631.0 426.0Q630.2 421.4 626.9 416.0M624.0 424.0Q623.7 428.4 621.2 433.7M616.5 427.0Q613.8 424.5 609.3 422.8M658.5 449.0Q657.9 455.1 654.0 462.3M650.0 452.0Q647.3 446.4 641.3 440.9M642.0 452.0Q640.7 454.6 637.9 457.3" fill="none" stroke="#ededed" stroke-width="4.500" stroke-linecap="round" filter="url(#b2)"/><path d="M660.0 430.7Q655.9 431.1 650.6 429.5M656.0 424.0Q656.8 421.8 656.7 418.7M651.3 419.3Q637.3 424.3 617.6 423.5M646.7 414.7Q647.6 412.0 647.5 408.1M642.0 410.0Q639.9 413.3 635.7 416.2M634.0 409.0Q633.3 406.9 631.4 404.7M661.5 440.5Q661.7 438.9 661.1 436.8M656.0 437.0Q643.8 444.6 625.0 448.0M650.5 433.5Q650.9 430.5 649.8 426.5M645.0 430.0Q637.6 438.4 624.3 445.1M638.0 428.0Q637.4 424.2 634.7 419.8M631.0 426.0Q627.3 430.2 620.6 433.5M624.0 424.0Q620.5 420.7 614.5 418.4M616.5 427.0Q616.3 429.5 614.9 432.4M658.5 449.0Q652.8 443.2 642.8 439.0M650.0 452.0Q647.5 457.3 641.7 462.6M642.0 452.0Q639.3 446.4 633.2 440.7" fill="none" stroke="#8e8e8e" stroke-width="3.2" stroke-linecap="round" filter="url(#b2)" opacity="0.5"/><circle cx="624" cy="410" r="4" fill="#707070" filter="url(#b2)"/><circle cx="607" cy="433" r="4" fill="#707070" filter="url(#b2)"/><circle cx="640" cy="460" r="4" fill="#707070" filter="url(#b2)"/><circle cx="630" cy="444" r="4" fill="#707070" filter="url(#b2)"/><path d="M668.0 444.0C666.0 440.7 660.3 429.7 656.0 424.0C651.7 418.3 647.0 412.7 642.0 410.0C637.0 407.3 628.7 408.3 626.0 408.0" fill="none" stroke="#f4f4f4" stroke-width="1.5" stroke-linecap="round" filter="url(#b05)"/><path d="M667.0 444.0C663.3 441.7 652.2 433.3 645.0 430.0C637.8 426.7 630.0 424.0 624.0 424.0C618.0 424.0 611.5 429.0 609.0 430.0" fill="none" stroke="#f4f4f4" stroke-width="1.5" stroke-linecap="round" filter="url(#b05)"/><path d="M667.0 446.0C664.2 447.0 655.5 451.0 650.0 452.0C644.5 453.0 636.7 452.0 634.0 452.0" fill="none" stroke="#f4f4f4" stroke-width="1.5" stroke-linecap="round" filter="url(#b05)"/><path d="M617.8 433.0L625.8 429.8L620.3 436.4Z" fill="#ffff82" filter="url(#b05)"/><ellipse cx="628" cy="437" rx="4" ry="2.5" fill="#fdfd86" transform="rotate(0 628 437)" filter="url(#b05)"/><ellipse cx="624" cy="444" rx="3" ry="2" fill="#fdfd86" transform="rotate(0 624 444)" filter="url(#b05)"/><ellipse cx="638" cy="418" rx="4" ry="1.5" fill="#fdfd86" transform="rotate(15 638 418)" filter="url(#b05)"/><ellipse cx="646" cy="458" rx="3" ry="1.5" fill="#fdfd86" transform="rotate(10 646 458)" filter="url(#b05)"/></g><g clip-path="url(#cL4)"><path d="M658.0 517.0C658.3 514.0 659.0 509.0 660.0 506.0C661.0 503.0 662.3 501.0 664.0 499.0C665.7 497.0 668.0 495.8 670.0 494.0C672.0 492.2 674.3 490.3 676.0 488.0C677.7 485.7 679.5 482.3 680.0 480.0C680.5 477.7 680.3 475.3 679.0 474.0C677.7 472.7 674.5 472.0 672.0 472.0C669.5 472.0 666.5 472.7 664.0 474.0C661.5 475.3 659.0 477.7 657.0 480.0C655.0 482.3 653.2 485.3 652.0 488.0C650.8 490.7 650.8 495.8 650.0 496.0C649.2 496.2 648.2 491.7 647.0 489.0C645.8 486.3 644.2 482.5 643.0 480.0C641.8 477.5 641.2 473.2 640.0 474.0C638.8 474.8 637.5 484.7 636.0 485.0C634.5 485.3 632.7 478.8 631.0 476.0C629.3 473.2 627.7 470.2 626.0 468.0C624.3 465.8 622.8 462.7 621.0 463.0C619.2 463.3 616.3 467.2 615.0 470.0C613.7 472.8 613.5 476.7 613.0 480.0C612.5 483.3 611.8 486.7 612.0 490.0C612.2 493.3 613.0 497.0 614.0 500.0C615.0 503.0 616.3 506.3 618.0 508.0C619.7 509.7 622.2 509.3 624.0 510.0C625.8 510.7 629.2 510.7 629.0 512.0C628.8 513.3 624.8 515.7 623.0 518.0C621.2 520.3 619.3 523.0 618.0 526.0C616.7 529.0 616.0 532.3 615.0 536.0C614.0 539.7 611.3 545.5 612.0 548.0C612.7 550.5 616.7 551.3 619.0 551.0C621.3 550.7 623.8 548.0 626.0 546.0C628.2 544.0 630.7 539.0 632.0 539.0C633.3 539.0 633.3 543.5 634.0 546.0C634.7 548.5 634.8 553.8 636.0 554.0C637.2 554.2 639.3 549.5 641.0 547.0C642.7 544.5 644.5 538.8 646.0 539.0C647.5 539.2 648.7 547.7 650.0 548.0C651.3 548.3 652.8 543.7 654.0 541.0C655.2 538.3 656.3 534.8 657.0 532.0C657.7 529.2 657.8 526.5 658.0 524.0C658.2 521.5 657.7 520.0 658.0 517.0Z" fill="#cecece"/><path d="M658.0 516.0C655.8 513.3 649.7 505.5 645.0 500.0C640.3 494.5 634.0 488.5 630.0 483.0C626.0 477.5 622.5 469.7 621.0 467.0" fill="none" stroke="#999999" stroke-width="11" stroke-linecap="round" filter="url(#b2)"/><path d="M658.0 516.0C658.3 513.3 658.5 505.0 660.0 500.0C661.5 495.0 664.0 490.0 667.0 486.0C670.0 482.0 676.2 477.7 678.0 476.0" fill="none" stroke="#999999" stroke-width="11" stroke-linecap="round" filter="url(#b2)"/><path d="M657.0 518.0C654.2 518.7 645.3 519.3 640.0 522.0C634.7 524.7 629.2 529.8 625.0 534.0C620.8 538.2 616.7 544.8 615.0 547.0" fill="none" stroke="#999999" stroke-width="11" stroke-linecap="round" filter="url(#b2)"/><path d="M653.7 510.7Q642.3 513.4 626.9 511.2M649.3 505.3Q653.3 497.0 654.1 484.7M645.0 500.0Q632.3 503.6 614.9 501.8M640.0 494.3Q642.6 488.3 642.8 479.5M635.0 488.7Q625.3 491.4 612.0 490.0M630.0 483.0Q631.4 481.1 632.1 478.0M625.5 475.0Q620.6 475.3 614.3 473.3M659.0 508.0Q651.5 503.2 644.6 493.5M660.0 500.0Q661.7 500.0 663.9 499.2M663.5 493.0Q659.6 488.0 657.2 479.8M667.0 486.0Q670.8 487.5 676.2 487.6M672.5 481.0Q671.4 477.2 671.8 472.0M648.5 520.0Q645.5 533.9 634.9 549.5M640.0 522.0Q633.1 518.7 623.0 518.0M632.5 528.0Q633.8 533.6 632.7 541.3M625.0 534.0Q621.0 533.1 615.6 534.1M620.0 540.5Q621.7 543.8 622.1 548.8" fill="none" stroke="#ededed" stroke-width="4.500" stroke-linecap="round" filter="url(#b2)"/><path d="M653.7 510.7Q660.0 497.3 661.3 477.5M649.3 505.3Q635.6 508.7 617.0 506.0M645.0 500.0Q646.9 495.5 647.0 489.1M640.0 494.3Q628.7 497.6 613.2 495.9M635.0 488.7Q635.7 487.0 635.8 484.6M630.0 483.0Q622.5 483.5 613.0 480.4M625.5 475.0Q626.8 473.2 627.5 470.3M660.0 500.0Q655.8 494.6 653.3 485.9M663.5 493.0Q667.7 493.1 672.9 491.1M667.0 486.0Q665.4 480.8 666.1 473.5M672.5 481.0Q675.1 482.1 678.9 482.1M648.5 520.0Q639.2 508.4 622.0 498.7M640.0 522.0Q642.6 533.0 640.3 548.0M632.5 528.0Q627.0 525.3 618.8 524.7M625.0 534.0Q627.1 538.1 627.6 544.1M620.0 540.5Q617.4 539.9 613.9 540.5" fill="none" stroke="#8e8e8e" stroke-width="3.2" stroke-linecap="round" filter="url(#b2)" opacity="0.5"/><circle cx="621" cy="467" r="5" fill="#707070" filter="url(#b2)"/><circle cx="614" cy="547" r="5" fill="#707070" filter="url(#b2)"/><circle cx="678" cy="476" r="4" fill="#707070" filter="url(#b2)"/><circle cx="636" cy="550" r="3" fill="#707070" filter="url(#b2)"/><circle cx="650" cy="545" r="3" fill="#707070" filter="url(#b2)"/><path d="M658.0 516.0C655.8 513.3 649.7 505.5 645.0 500.0C640.3 494.5 634.0 488.5 630.0 483.0C626.0 477.5 622.5 469.7 621.0 467.0" fill="none" stroke="#f4f4f4" stroke-width="1.5" stroke-linecap="round" filter="url(#b05)"/><path d="M658.0 516.0C658.3 513.3 658.5 505.0 660.0 500.0C661.5 495.0 664.0 490.0 667.0 486.0C670.0 482.0 676.2 477.7 678.0 476.0" fill="none" stroke="#f4f4f4" stroke-width="1.5" stroke-linecap="round" filter="url(#b05)"/><path d="M657.0 518.0C654.2 518.7 645.3 519.3 640.0 522.0C634.7 524.7 629.2 529.8 625.0 534.0C620.8 538.2 616.7 544.8 615.0 547.0" fill="none" stroke="#f4f4f4" stroke-width="1.5" stroke-linecap="round" filter="url(#b05)"/><path d="M649.5 487.5L646.0 494.5L645.3 486.7ZM611.3 478.0L621.5 481.7L610.7 482.2ZM675.3 492.8L668.2 492.0L674.4 488.6ZM617.3 522.2L625.6 526.4L616.4 526.3Z" fill="#ffff82" filter="url(#b05)"/><ellipse cx="617" cy="498" rx="2" ry="4" fill="#fdfd86" transform="rotate(0 617 498)" filter="url(#b05)"/><ellipse cx="644" cy="486" rx="1.5" ry="4" fill="#fdfd86" transform="rotate(-10 644 486)" filter="url(#b05)"/><ellipse cx="654" cy="494" rx="1.5" ry="5" fill="#fdfd86" transform="rotate(10 654 494)" filter="url(#b05)"/><ellipse cx="630" cy="528" rx="2" ry="3" fill="#fdfd86" transform="rotate(30 630 528)" filter="url(#b05)"/><ellipse cx="668" cy="484" rx="2" ry="3" fill="#fdfd86" transform="rotate(40 668 484)" filter="url(#b05)"/></g><g clip-path="url(#cL5)"><path d="M697.0 538.0C698.5 535.8 698.5 529.8 700.0 527.0C701.5 524.2 703.7 522.7 706.0 521.0C708.3 519.3 711.3 518.2 714.0 517.0C716.7 515.8 719.3 515.0 722.0 514.0C724.7 513.0 727.8 510.8 730.0 511.0C732.2 511.2 733.0 514.3 735.0 515.0C737.0 515.7 739.7 515.3 742.0 515.0C744.3 514.7 746.7 513.3 749.0 513.0C751.3 512.7 754.5 511.8 756.0 513.0C757.5 514.2 758.5 517.7 758.0 520.0C757.5 522.3 754.3 525.0 753.0 527.0C751.7 529.0 750.0 530.2 750.0 532.0C750.0 533.8 753.2 536.2 753.0 538.0C752.8 539.8 751.0 541.8 749.0 543.0C747.0 544.2 743.7 544.5 741.0 545.0C738.3 545.5 735.5 546.0 733.0 546.0C730.5 546.0 726.0 544.3 726.0 545.0C726.0 545.7 730.8 548.2 733.0 550.0C735.2 551.8 737.3 553.8 739.0 556.0C740.7 558.2 742.2 560.3 743.0 563.0C743.8 565.7 744.2 568.8 744.0 572.0C743.8 575.2 743.0 579.0 742.0 582.0C741.0 585.0 739.7 587.7 738.0 590.0C736.3 592.3 734.3 594.3 732.0 596.0C729.7 597.7 727.2 599.3 724.0 600.0C720.8 600.7 716.5 600.3 713.0 600.0C709.5 599.7 703.7 599.0 703.0 598.0C702.3 597.0 707.3 595.5 709.0 594.0C710.7 592.5 712.8 590.8 713.0 589.0C713.2 587.2 710.8 585.0 710.0 583.0C709.2 581.0 709.2 577.3 708.0 577.0C706.8 576.7 704.8 580.0 703.0 581.0C701.2 582.0 699.2 583.0 697.0 583.0C694.8 583.0 692.8 582.0 690.0 581.0C687.2 580.0 680.7 578.5 680.0 577.0C679.3 575.5 684.5 573.8 686.0 572.0C687.5 570.2 689.0 568.0 689.0 566.0C689.0 564.0 687.2 562.2 686.0 560.0C684.8 557.8 683.0 555.3 682.0 553.0C681.0 550.7 679.5 547.8 680.0 546.0C680.5 544.2 683.2 543.0 685.0 542.0C686.8 541.0 689.0 540.7 691.0 540.0C693.0 539.3 695.5 540.2 697.0 538.0Z" fill="#cecece"/><path d="M697.0 538.0C700.0 537.7 708.2 537.7 715.0 536.0C721.8 534.3 731.2 531.3 738.0 528.0C744.8 524.7 753.0 518.0 756.0 516.0" fill="none" stroke="#999999" stroke-width="11" stroke-linecap="round" filter="url(#b2)"/><path d="M697.0 538.0C699.8 540.0 709.5 545.0 714.0 550.0C718.5 555.0 722.7 561.3 724.0 568.0C725.3 574.7 724.7 585.0 722.0 590.0C719.3 595.0 710.3 596.7 708.0 598.0" fill="none" stroke="#999999" stroke-width="11" stroke-linecap="round" filter="url(#b2)"/><path d="M696.0 539.0C696.2 541.8 697.7 550.5 697.0 556.0C696.3 561.5 694.5 568.3 692.0 572.0C689.5 575.7 683.7 577.0 682.0 578.0" fill="none" stroke="#999999" stroke-width="11" stroke-linecap="round" filter="url(#b2)"/><path d="M706.0 537.0Q709.7 526.3 719.6 514.9M715.0 536.0Q720.4 541.5 729.8 545.5M722.7 533.3Q723.8 523.2 730.2 511.2M730.3 530.7Q737.2 537.6 749.2 542.8M738.0 528.0Q737.2 522.4 739.0 515.0M744.0 524.0Q747.6 526.1 753.0 527.0M750.0 520.0Q749.6 517.0 750.5 513.0M702.7 542.0Q715.6 534.7 735.2 532.2M708.3 546.0Q705.8 560.6 710.0 580.0M714.0 550.0Q723.9 549.4 736.5 553.5M717.3 556.0Q711.4 564.3 708.2 577.6M720.7 562.0Q730.6 561.4 743.3 565.6M724.0 568.0Q716.4 570.8 708.4 578.1M723.3 575.3Q731.0 579.9 738.3 589.4M722.7 582.7Q717.9 584.4 713.0 588.9M722.0 590.0Q722.3 594.4 720.5 600.0M715.0 594.0Q713.2 592.8 710.5 592.2M696.5 547.5Q701.9 549.7 707.5 555.1M697.0 556.0Q691.9 556.7 686.1 560.1M694.5 564.0Q699.4 568.5 703.2 576.6M692.0 572.0Q690.0 570.7 687.0 570.1" fill="none" stroke="#ededed" stroke-width="4.500" stroke-linecap="round" filter="url(#b2)"/><path d="M706.0 537.0Q713.8 549.6 729.8 561.3M715.0 536.0Q716.1 525.8 722.6 513.8M722.7 533.3Q729.3 540.0 740.8 545.0M730.3 530.7Q731.1 523.5 735.7 515.0M738.0 528.0Q742.7 530.8 750.0 532.0M744.0 524.0Q743.4 519.8 744.7 514.2M750.0 520.0Q752.6 521.5 756.5 522.1M702.7 542.0Q700.2 556.6 704.3 576.0M708.3 546.0Q721.3 538.7 740.9 536.2M714.0 550.0Q705.4 562.1 700.7 581.3M717.3 556.0Q727.8 555.3 741.1 559.7M720.7 562.0Q714.4 570.9 711.0 584.9M724.0 568.0Q732.8 573.2 741.0 584.0M723.3 575.3Q717.0 577.7 710.4 583.7M722.7 582.7Q728.7 586.2 734.4 593.6M722.0 590.0Q717.9 587.1 711.3 585.6M715.0 594.0Q715.2 596.6 714.1 600.0M696.5 547.5Q690.5 550.8 684.8 557.8M697.0 556.0Q702.7 561.2 707.0 570.5M694.5 564.0Q691.9 564.4 689.0 566.1M692.0 572.0Q692.4 576.0 690.9 581.2" fill="none" stroke="#8e8e8e" stroke-width="3.2" stroke-linecap="round" filter="url(#b2)" opacity="0.5"/><circle cx="756" cy="517" r="5" fill="#707070" filter="url(#b2)"/><circle cx="708" cy="598" r="5" fill="#707070" filter="url(#b2)"/><circle cx="682" cy="578" r="4" fill="#707070" filter="url(#b2)"/><circle cx="740" cy="585" r="4" fill="#707070" filter="url(#b2)"/><circle cx="705" cy="522" r="4" fill="#707070" filter="url(#b2)"/><path d="M697.0 538.0C700.0 537.7 708.2 537.7 715.0 536.0C721.8 534.3 731.2 531.3 738.0 528.0C744.8 524.7 753.0 518.0 756.0 516.0" fill="none" stroke="#f4f4f4" stroke-width="1.5" stroke-linecap="round" filter="url(#b05)"/><path d="M697.0 538.0C699.8 540.0 709.5 545.0 714.0 550.0C718.5 555.0 722.7 561.3 724.0 568.0C725.3 574.7 724.7 585.0 722.0 590.0C719.3 595.0 710.3 596.7 708.0 598.0" fill="none" stroke="#f4f4f4" stroke-width="1.5" stroke-linecap="round" filter="url(#b05)"/><path d="M696.0 539.0C696.2 541.8 697.7 550.5 697.0 556.0C696.3 561.5 694.5 568.3 692.0 572.0C689.5 575.7 683.7 577.0 682.0 578.0" fill="none" stroke="#f4f4f4" stroke-width="1.5" stroke-linecap="round" filter="url(#b05)"/><path d="M741.3 547.9L731.7 539.2L743.6 544.3ZM747.0 512.4L744.4 519.1L742.8 512.1ZM741.0 586.9L733.0 576.4L743.9 583.8ZM710.3 582.9L716.7 587.8L708.7 586.8Z" fill="#ffff82" filter="url(#b05)"/><ellipse cx="722" cy="527" rx="5" ry="3" fill="#fdfd86" transform="rotate(-15 722 527)" filter="url(#b05)"/><ellipse cx="743" cy="522" rx="3" ry="1.5" fill="#fdfd86" transform="rotate(-20 743 522)" filter="url(#b05)"/><ellipse cx="738" cy="540" rx="3" ry="1.5" fill="#fdfd86" transform="rotate(0 738 540)" filter="url(#b05)"/><ellipse cx="700" cy="565" rx="2" ry="4" fill="#fdfd86" transform="rotate(10 700 565)" filter="url(#b05)"/><ellipse cx="733" cy="572" rx="2" ry="5" fill="#fdfd86" transform="rotate(0 733 572)" filter="url(#b05)"/><ellipse cx="716" cy="590" rx="2" ry="3" fill="#fdfd86" transform="rotate(30 716 590)" filter="url(#b05)"/></g><circle cx="675.6" cy="408.6" r="4.700" fill="url(#gr)" stroke="#b8b89a" stroke-width=".7"/><circle cx="686.1" cy="404.6" r="4.700" fill="url(#gr)" stroke="#b8b89a" stroke-width=".7"/><circle cx="665.0" cy="412.6" r="4.700" fill="url(#gr)" stroke="#b8b89a" stroke-width=".7"/><circle cx="684.5" cy="415.7" r="4.700" fill="url(#gr)" stroke="#b8b89a" stroke-width=".7"/><circle cx="695.1" cy="412.2" r="4.700" fill="url(#gr)" stroke="#b8b89a" stroke-width=".7"/><circle cx="662.9" cy="423.4" r="4.700" fill="url(#gr)" stroke="#b8b89a" stroke-width=".7"/><circle cx="673.5" cy="419.9" r="4.700" fill="url(#gr)" stroke="#b8b89a" stroke-width=".7"/><circle cx="688.5" cy="426.2" r="4.700" fill="url(#gr)" stroke="#b8b89a" stroke-width=".7"/><circle cx="698.6" cy="422.3" r="4.700" fill="url(#gr)" stroke="#b8b89a" stroke-width=".7"/><circle cx="665.7" cy="434.5" r="4.700" fill="url(#gr)" stroke="#b8b89a" stroke-width=".7"/><circle cx="677.0" cy="430.5" r="4.700" fill="url(#gr)" stroke="#b8b89a" stroke-width=".7"/><circle cx="692.0" cy="436.8" r="4.700" fill="url(#gr)" stroke="#b8b89a" stroke-width=".7"/><circle cx="702.6" cy="433.3" r="4.700" fill="url(#gr)" stroke="#b8b89a" stroke-width=".7"/><circle cx="670.4" cy="445.0" r="4.700" fill="url(#gr)" stroke="#b8b89a" stroke-width=".7"/><circle cx="681.5" cy="440.8" r="4.700" fill="url(#gr)" stroke="#b8b89a" stroke-width=".7"/><circle cx="690.4" cy="448.5" r="4.700" fill="url(#gr)" stroke="#b8b89a" stroke-width=".7"/><circle cx="702.1" cy="443.8" r="4.700" fill="url(#gr)" stroke="#b8b89a" stroke-width=".7"/><circle cx="678.2" cy="452.1" r="4.700" fill="url(#gr)" stroke="#b8b89a" stroke-width=".7"/><circle cx="693.4" cy="458.6" r="4.700" fill="url(#gr)" stroke="#b8b89a" stroke-width=".7"/><circle cx="704.0" cy="454.4" r="4.700" fill="url(#gr)" stroke="#b8b89a" stroke-width=".7"/><circle cx="683.3" cy="462.6" r="4.700" fill="url(#gr)" stroke="#b8b89a" stroke-width=".7"/><circle cx="702.6" cy="465.4" r="4.700" fill="url(#gr)" stroke="#b8b89a" stroke-width=".7"/><circle cx="691.5" cy="469.7" r="4.700" fill="url(#gr)" stroke="#b8b89a" stroke-width=".7"/><circle cx="700.5" cy="476.7" r="4.700" fill="url(#gr)" stroke="#b8b89a" stroke-width=".7"/></svg><div class="a" style="left:1071px;top:95px;width:17px;height:590px;background:#f0f0f0"></div><div class="a" style="left:1072px;top:112px;width:15px;height:556px;background:#cdcdcd"></div><svg class="a" style="left:1074.5px;top:100.5px" width="10" height="7" viewBox="0 0 10 7"><path d="M1.200 5.800l3.800-3.800 3.800 3.800" fill="none" stroke="#4e4e4e" stroke-width="2"/></svg><svg class="a" style="left:1074.5px;top:673px" width="10" height="7" viewBox="0 0 10 7"><path d="M1.200 1.200l3.800 3.800 3.800-3.800" fill="none" stroke="#4e4e4e" stroke-width="2"/></svg><div class="a" style="left:277px;top:685px;width:812px;height:18px;background:#f0f0f0"></div><div class="a" style="left:277px;top:684px;width:21px;height:18px;background:#f0f0f0;border-top:1px solid #9a9a9a;border-left:1px solid #d8d8d8;border-right:1px solid #6e6e6e;border-bottom:1px solid #6e6e6e"></div><svg class="a" style="left:283px;top:688px" width="10" height="9" viewBox="0 0 10 9"><path d="M1.500 0v9" stroke="#111" stroke-width="1.300" stroke-dasharray="2.500 1.500"/><path d="M4 0l4.500 4.500L4 9z" fill="#111"/></svg><div class="a" style="left:315px;top:686px;width:738px;height:15px;background:#cdcdcd"></div><svg class="a" style="left:302.5px;top:688.5px" width="7" height="10" viewBox="0 0 7 10"><path d="M5.800 1.200l-3.800 3.800 3.800 3.800" fill="none" stroke="#4e4e4e" stroke-width="2"/></svg><svg class="a" style="left:1058px;top:688.5px" width="7" height="10" viewBox="0 0 7 10"><path d="M1.200 1.200l3.800 3.800-3.800 3.800" fill="none" stroke="#4e4e4e" stroke-width="2"/></svg><div class="a" style="left:277px;top:703px;width:812px;height:1px;background:#f9f9f9"></div><div class="bh" style="top:45px"><span>Vectors</span></div><div class="hbtn" style="left:1327px;top:46px;background:#c9d2de;border-left-color:#e8eef6;border-top-color:#e8eef6;border-right-color:#6a7890;border-bottom-color:#6a7890"><i></i></div><div class="combo" style="top:62px"><span>Default Sheet</span></div><div class="a" style="left:1325px;top:64px;width:17px;height:19px;background:#f2f2f2;border-left:1px solid #fff;border-top:1px solid #fff;border-right:2px solid #6a6a6a;border-bottom:2px solid #6a6a6a"></div><svg class="a" style="left:1330px;top:71px" width="8" height="5" viewBox="0 0 8 5"><path d="M0 0h8l-4 4.500z" fill="#111"/></svg><svg class="a" style="left:1103px;top:90px" width="15" height="17" viewBox="0 0 15 17"><path d="M8 14l6-2v3H3z" fill="#9aa2b0"/><path d="M1 1h4l4 4 2 3v7H1z" fill="url(#gDoc)"/><path d="M5 1v4h4z" fill="#eef2f8" opacity=".7"/></svg><svg class="a" style="left:1139px;top:91px" width="16" height="14" viewBox="0 0 16 14"><path d="M4 12l11-3v2l-8 2z" fill="#bdbdbd"/><path d="M1 3l4-2 3 1 4 1v3l-9 5z" fill="#e6d200"/><path d="M1 4l8 .500 2 3 4 .500-2 3.500-11 1.500-1.500-4z" fill="url(#gFold)"/></svg><svg class="a" style="left:1177px;top:91px" width="17" height="15" viewBox="0 0 17 15"><path d="M11 12l6-3v1.500l-3 2.500z" fill="#bdbdbd"/><path d="M1 1h12v12H2.500L1 11.500z" fill="url(#gBlue)"/><rect x="3" y="1" width="8" height="5.500" fill="url(#gMet)"/><rect x="4" y="8.500" width="6.500" height="4.500" fill="#b9c0cc"/><rect x="5" y="9.500" width="2" height="3" fill="#2558b0"/></svg><svg class="a" style="left:1212px;top:90px" width="18" height="17" viewBox="0 0 18 17"><path d="M8 15l9-2v2H6z" fill="#bdbdbd"/><path d="M2 1h7l2 2v9H2z" fill="#c09a6c"/><path d="M5 4h7l3 3v8H5z" fill="#b48a5c"/><path d="M2 2.500h-1M2 4.500h-1M2 6.500h-1M2 8.500h-1M2 10.500h-1M5 12.500h-1" stroke="#a07848" stroke-width="1"/><path d="M12 4v3h3z" fill="#d8b890"/></svg><svg class="a" style="left:1252px;top:90px" width="12" height="17" viewBox="0 0 12 17"><path d="M0 1h8l4 3v13H0z" fill="#8f9cb4"/><path d="M8 1v3h4z" fill="#d8deea"/><circle cx="6" cy="8" r="4.200" fill="url(#gBulb)"/><rect x="4.300" y="11.500" width="3.400" height="3" fill="#3a2c10"/><path d="M0 14h12v3H0z" fill="#5a6478" opacity=".6"/></svg><svg class="a" style="left:1290px;top:92px" width="11" height="13" viewBox="0 0 11 13"><path d="M.500 3l1.500 9c2 1.200 5 1.200 7 0l1.500-9z" fill="#4a86e0"/><ellipse cx="5.500" cy="3" rx="5" ry="2.200" fill="#9cc6f6" stroke="#3a70c8" stroke-width=".8"/><path d="M2 5l1 6" stroke="#8ab8f4" stroke-width="1.200"/></svg><svg class="a" style="left:1323px;top:89px" width="18" height="18" viewBox="0 0 18 18"><rect x=".5" y=".5" width="17" height="17" fill="#f7f3e6" stroke="#b9b4a4" stroke-width="1"/><circle cx="5.5" cy="8.5" r="4.6" fill="url(#gBulb)"/><path d="M3.8 12.5h3.400v3.200h-3.400z" fill="#2a1c08"/><circle cx="12.5" cy="6.5" r="4.6" fill="url(#gBulb)"/><path d="M10.8 10.5h3.400v3.200h-3.400z" fill="#2a1c08"/></svg><div class="lrow" style="top:112px"></div><div class="a" style="left:1106px;top:117px;width:17px;height:17px;background:#e2e2e2;border-top:1px solid #f4f4f4;border-left:1px solid #f4f4f4;border-right:1px solid #a8a8a8;border-bottom:1px solid #a8a8a8"></div><div class="a" style="left:1108px;top:119px;width:13px;height:13px;border-radius:50%;background:#000"></div><div class="t" style="left:1128px;top:119px;font-size:12.5px;color:#111">Default Layer</div><svg class="a" style="left:1288px;top:116px" width="16" height="17" viewBox="0 0 16 17"><rect x=".5" y=".5" width="15" height="16" fill="#c4c4c4" stroke="#eee"/><path d="M0 16.500h16M15.500 0v17" stroke="#777" stroke-width="1"/><path d="M5 9V6.500a3 3 0 0 1 6 0V9" fill="none" stroke="#f2f2f2" stroke-width="1.600"/><rect x="3.500" y="9" width="9" height="6.500" fill="#909090"/><path d="M8 14.500v-3.500M6.300 12.500L8 10.800l1.700 1.700" stroke="#111" stroke-width="1.300" fill="none"/></svg><svg class="a" style="left:1306px;top:116px" width="16" height="17" viewBox="0 0 16 17"><rect width="16" height="17" fill="#dcdcdc"/><path d="M2.500 0v17M0 14.500h16" stroke="#111" stroke-width="1" stroke-dasharray="2 1.300"/><path d="M13.500 2L5 11" stroke="#111" stroke-width="2"/><path d="M4 12.500l1-6 5 5z" fill="#111"/></svg><svg class="a" style="left:1323px;top:116px" width="18" height="17" viewBox="0 0 18 17"><rect x=".5" y=".5" width="17" height="16" fill="#e6e2d4" stroke="#b4b0a4"/><circle cx="9" cy="7.5" r="4.8" fill="url(#gBulb)"/><path d="M7.3 11.700000000000001h3.400v3.200h-3.400z" fill="#2a1c08"/></svg><svg class="a" style="left:1312px;top:141px" width="12" height="12" viewBox="0 0 12 12"><rect x=".5" y=".5" width="11" height="11" rx="1.500" fill="#1c4ea8" stroke="#0c2c78"/><path d="M6 9.500V3M3 5.500l3-3 3 3" stroke="#fff" stroke-width="1.700" fill="none"/></svg><svg class="a" style="left:1330px;top:141px" width="12" height="12" viewBox="0 0 12 12"><rect x=".5" y=".5" width="11" height="11" rx="1.500" fill="#1c4ea8" stroke="#0c2c78"/><path d="M6 2.500V9M3 6.500l3 3 3-3" stroke="#fff" stroke-width="1.700" fill="none"/></svg><div class="bh" style="top:172px"><span>Bitmaps</span></div><div class="hbtn dn" style="left:1327px;top:173px;background:#c9d2de;border-left-color:#e8eef6;border-top-color:#e8eef6;border-right-color:#6a7890;border-bottom-color:#6a7890"><i></i></div><div class="bh" style="top:203px"><span>Reliefs</span></div><div class="hbtn" style="left:1327px;top:204px;background:#c9d2de;border-left-color:#e8eef6;border-top-color:#e8eef6;border-right-color:#6a7890;border-bottom-color:#6a7890"><i></i></div><div class="combo" style="top:220px"><span>Front Relief</span></div><div class="a" style="left:1325px;top:222px;width:17px;height:19px;background:#f2f2f2;border-left:1px solid #fff;border-top:1px solid #fff;border-right:2px solid #6a6a6a;border-bottom:2px solid #6a6a6a"></div><svg class="a" style="left:1330px;top:229px" width="8" height="5" viewBox="0 0 8 5"><path d="M0 0h8l-4 4.500z" fill="#111"/></svg><svg class="a" style="left:1103px;top:249px" width="15" height="17" viewBox="0 0 15 17"><path d="M8 14l6-2v3H3z" fill="#9aa2b0"/><path d="M1 1h4l4 4 2 3v7H1z" fill="url(#gDoc)"/><path d="M5 1v4h4z" fill="#eef2f8" opacity=".7"/></svg><svg class="a" style="left:1130px;top:250px" width="16" height="14" viewBox="0 0 16 14"><path d="M4 12l11-3v2l-8 2z" fill="#bdbdbd"/><path d="M1 3l4-2 3 1 4 1v3l-9 5z" fill="#e6d200"/><path d="M1 4l8 .500 2 3 4 .500-2 3.500-11 1.500-1.500-4z" fill="url(#gFold)"/></svg><svg class="a" style="left:1157px;top:250px" width="17" height="15" viewBox="0 0 17 15"><path d="M11 12l6-3v1.500l-3 2.500z" fill="#bdbdbd"/><path d="M1 1h12v12H2.500L1 11.500z" fill="url(#gBlue)"/><rect x="3" y="1" width="8" height="5.500" fill="url(#gMet)"/><rect x="4" y="8.500" width="6.500" height="4.500" fill="#b9c0cc"/><rect x="5" y="9.500" width="2" height="3" fill="#2558b0"/></svg><svg class="a" style="left:1185px;top:249px" width="18" height="17" viewBox="0 0 18 17"><path d="M8 15l9-2v2H6z" fill="#bdbdbd"/><path d="M2 1h7l2 2v9H2z" fill="#c09a6c"/><path d="M5 4h7l3 3v8H5z" fill="#b48a5c"/><path d="M2 2.500h-1M2 4.500h-1M2 6.500h-1M2 8.500h-1M2 10.500h-1M5 12.500h-1" stroke="#a07848" stroke-width="1"/><path d="M12 4v3h3z" fill="#d8b890"/></svg><svg class="a" style="left:1212px;top:249px" width="17" height="17" viewBox="0 0 17 17"><path d="M1 12l7.500-4 7.500 4-7.500 4z" fill="#b01818"/><path d="M1 5l7.500-4 7.500 4-7.500 4z" fill="#8a90e8"/><path d="M8.500 7v5M6.500 10l2 2.500 2-2.500" stroke="#f4c020" stroke-width="1.600" fill="none"/></svg><svg class="a" style="left:1243px;top:249px" width="12" height="17" viewBox="0 0 12 17"><path d="M0 1h8l4 3v13H0z" fill="#8f9cb4"/><path d="M8 1v3h4z" fill="#d8deea"/><circle cx="6" cy="8" r="4.200" fill="url(#gBulb)"/><rect x="4.300" y="11.500" width="3.400" height="3" fill="#3a2c10"/><path d="M0 14h12v3H0z" fill="#5a6478" opacity=".6"/></svg><svg class="a" style="left:1269px;top:250px" width="15" height="15" viewBox="0 0 15 15"><rect width="15" height="15" fill="#080808"/><circle cx="7.500" cy="9.500" r="4" fill="#a8a8a8"/><circle cx="7.500" cy="5" r="2.800" fill="#999"/><circle cx="4.800" cy="3" r="1.200" fill="#888"/><circle cx="10.200" cy="3" r="1.200" fill="#888"/><circle cx="7.500" cy="10" r="2" fill="#ddd"/><path d="M11.500 5h2M12.500 5v3" stroke="#fff" stroke-width=".9"/><circle cx="4.500" cy="13" r="1.400" fill="#aaa"/><circle cx="10.500" cy="13" r="1.400" fill="#aaa"/></svg><svg class="a" style="left:1298px;top:251px" width="11" height="13" viewBox="0 0 11 13"><path d="M.500 3l1.500 9c2 1.200 5 1.200 7 0l1.500-9z" fill="#4a86e0"/><ellipse cx="5.500" cy="3" rx="5" ry="2.200" fill="#9cc6f6" stroke="#3a70c8" stroke-width=".8"/><path d="M2 5l1 6" stroke="#8ab8f4" stroke-width="1.200"/></svg><svg class="a" style="left:1323px;top:248px" width="18" height="18" viewBox="0 0 18 18"><rect x=".5" y=".5" width="17" height="17" fill="#f7f3e6" stroke="#b9b4a4" stroke-width="1"/><circle cx="5.5" cy="8.5" r="4.6" fill="url(#gBulb)"/><path d="M3.8 12.5h3.400v3.200h-3.400z" fill="#2a1c08"/><circle cx="12.5" cy="6.5" r="4.6" fill="url(#gBulb)"/><path d="M10.8 10.5h3.400v3.200h-3.400z" fill="#2a1c08"/></svg><div class="lrow" style="top:270px"></div><svg class="a" style="left:1111px;top:273px" width="22" height="21" viewBox="0 0 22 21"><path d="M2 11c1-8 12-10 18 1l-3 2c-4-7-10-6-12-1z" fill="#c8aa5a"/><path d="M2 11c0-5 8-7 13 1v3H3z" fill="#7a86c8"/><path d="M2 11c1-6 10-8 15 2" fill="none" stroke="#e8d8a0" stroke-width="1.300"/><path d="M1 16.500h7M4.500 13v7" stroke="#111" stroke-width="1.300"/></svg><svg class="a" style="left:1139px;top:279px" width="5" height="9" viewBox="0 0 5 9"><path d="M0 0l5 4.500-5 4.500z" fill="#111"/></svg><div class="t" style="left:1149px;top:277px;font-size:12.5px;color:#111">Relief Layer 1</div><svg class="a" style="left:1323px;top:274px" width="18" height="17" viewBox="0 0 18 17"><rect x=".5" y=".5" width="17" height="16" fill="#e6e2d4" stroke="#b4b0a4"/><circle cx="9" cy="7.5" r="4.8" fill="url(#gBulb)"/><path d="M7.3 11.700000000000001h3.400v3.200h-3.400z" fill="#2a1c08"/></svg><svg class="a" style="left:1312px;top:299px" width="12" height="12" viewBox="0 0 12 12"><rect x=".5" y=".5" width="11" height="11" rx="1.500" fill="#1c4ea8" stroke="#0c2c78"/><path d="M6 9.500V3M3 5.500l3-3 3 3" stroke="#fff" stroke-width="1.700" fill="none"/></svg><svg class="a" style="left:1330px;top:299px" width="12" height="12" viewBox="0 0 12 12"><rect x=".5" y=".5" width="11" height="11" rx="1.500" fill="#1c4ea8" stroke="#0c2c78"/><path d="M6 2.500V9M3 6.500l3 3 3-3" stroke="#fff" stroke-width="1.700" fill="none"/></svg><div class="a" style="left:277px;top:706px;width:812px;height:1px;background:#a6a6a6"></div><div class="a" style="left:277px;top:707px;width:812px;height:1px;background:#fdfdfd"></div><div class="a" style="left:277px;top:706px;width:1px;height:41px;background:#a6a6a6"></div><div class="a" style="left:298px;top:723px;width:26px;height:21px;background:#000"></div><div class="a" style="left:283px;top:711px;width:25px;height:20px;background:#fff;border:1px solid #000;box-shadow:1px 1px 0 #888"></div><svg class="a" style="left:311px;top:712px" width="13" height="10" viewBox="0 0 13 10"><rect x=".7" y=".7" width="7" height="4.600" rx="2.300" fill="none" stroke="#111" stroke-width="1.100"/><rect x="4.300" y="3.700" width="7.500" height="5" rx="2.500" fill="none" stroke="#111" stroke-width="1.100"/></svg><div class="a" style="left:333px;top:712px;width:30px;height:30px;background:#ffffff;border:1px solid #111;box-shadow:1px 1px 0 #6a6a6a"></div><div class="a" style="left:368px;top:712px;width:30px;height:30px;background:#000000;border:1px solid #111;box-shadow:1px 1px 0 #6a6a6a"></div><div class="a" style="left:403px;top:712px;width:30px;height:30px;background:#00ffff;border:1px solid #111;box-shadow:1px 1px 0 #6a6a6a"></div><div class="a" style="left:438px;top:712px;width:30px;height:30px;background:#3040d8;border:1px solid #111;box-shadow:1px 1px 0 #6a6a6a"></div><div class="a" style="left:473px;top:712px;width:30px;height:30px;background:#58b850;border:1px solid #111;box-shadow:1px 1px 0 #6a6a6a"></div><div class="a" style="left:508px;top:712px;width:30px;height:30px;background:#d81020;border:1px solid #111;box-shadow:1px 1px 0 #6a6a6a"></div><div class="a" style="left:543px;top:712px;width:30px;height:30px;background:#a030e0;border:1px solid #111;box-shadow:1px 1px 0 #6a6a6a"></div><div class="a" style="left:578px;top:712px;width:30px;height:30px;background:#ffff80;border:1px solid #111;box-shadow:1px 1px 0 #6a6a6a"></div><div class="a" style="left:613px;top:712px;width:30px;height:30px;background:#a89830;border:1px solid #111;box-shadow:1px 1px 0 #6a6a6a"></div><div class="a" style="left:648px;top:712px;width:30px;height:30px;background:#ffc818;border:1px solid #111;box-shadow:1px 1px 0 #6a6a6a"></div><div class="a" style="left:683px;top:712px;width:30px;height:30px;background:#000000;border:1px solid #111;box-shadow:1px 1px 0 #6a6a6a"></div><div class="a" style="left:718px;top:712px;width:30px;height:30px;background:#000000;border:1px solid #111;box-shadow:1px 1px 0 #6a6a6a"></div><div class="a" style="left:753px;top:712px;width:30px;height:30px;background:#000000;border:1px solid #111;box-shadow:1px 1px 0 #6a6a6a"></div><div class="a" style="left:788px;top:712px;width:30px;height:30px;background:#000000;border:1px solid #111;box-shadow:1px 1px 0 #6a6a6a"></div><div class="a" style="left:823px;top:712px;width:30px;height:30px;background:#000000;border:1px solid #111;box-shadow:1px 1px 0 #6a6a6a"></div><div class="a" style="left:858px;top:712px;width:30px;height:30px;background:#000000;border:1px solid #111;box-shadow:1px 1px 0 #6a6a6a"></div><div class="a" style="left:893px;top:712px;width:30px;height:30px;background:#000000;border:1px solid #111;box-shadow:1px 1px 0 #6a6a6a"></div><div class="a" style="left:928px;top:712px;width:30px;height:30px;background:#000000;border:1px solid #111;box-shadow:1px 1px 0 #6a6a6a"></div><div class="a" style="left:963px;top:712px;width:30px;height:30px;background:#000000;border:1px solid #111;box-shadow:1px 1px 0 #6a6a6a"></div><div class="a" style="left:998px;top:712px;width:30px;height:30px;background:#000000;border:1px solid #111;box-shadow:1px 1px 0 #6a6a6a"></div><div class="a" style="left:1033px;top:712px;width:30px;height:30px;background:#000000;border:1px solid #111;box-shadow:1px 1px 0 #6a6a6a"></div><svg class="a" style="left:1074.500px;top:713px" width="10" height="7" viewBox="0 0 10 7"><path d="M1.200 5.800l3.800-3.800 3.800 3.800" fill="none" stroke="#4e4e4e" stroke-width="2"/></svg><svg class="a" style="left:1074.500px;top:736px" width="10" height="7" viewBox="0 0 10 7"><path d="M1.200 1.200l3.800 3.800 3.800-3.800" fill="none" stroke="#4e4e4e" stroke-width="2"/></svg><svg class="a" width="0" height="0"><defs><filter id="nz" x="0" y="0" width="100%" height="100%"><feTurbulence type="fractalNoise" baseFrequency=".2 .24" numOctaves="2" seed="7"/><feColorMatrix type="matrix" values=".55 0 0 0 .49  .55 0 0 0 .49  .55 0 0 0 .49  0 0 0 0 1"/></filter></defs></svg><div class="a" style="left:0;top:721px;width:270px;height:1px;background:#9c9c9c"></div><div class="a" style="left:0;top:722px;width:270px;height:24px;background:#dcdcdc"></div><svg class="a" style="left:128px;top:722px" width="142" height="24"><rect width="142" height="24" filter="url(#nz)"/></svg><div class="a" style="left:0;top:721px;width:62px;height:25px;background:#f0f0f0;border-right:1px solid #a0a0a0;border-bottom:1px solid #a0a0a0;border-radius:0 0 5px 0"></div><div class="a" style="left:63px;top:722px;width:66px;height:24px;background:#f2f2f2;border:1px solid #a0a0a0;border-top:none;border-radius:0 0 5px 5px"></div><div class="t" style="left:8px;top:726px;font-size:12.300px;letter-spacing:-.28px;color:#111">Assistant</div><div class="t" style="left:71px;top:727px;font-size:12.300px;color:#111">Toolpaths</div><div class="a" style="left:0;top:746px;width:276px;height:1px;background:#a0a0a0"></div><div class="a" style="left:0;top:747px;width:276px;height:1px;background:#fff"></div><div class="a" style="left:1095px;top:721px;width:271px;height:1px;background:#9c9c9c"></div><svg class="a" style="left:1095px;top:722px" width="271" height="24"><rect width="271" height="24" filter="url(#nz)"/></svg><div class="a" style="left:1095px;top:721px;width:49px;height:25px;background:#f0f0f0;border-right:1px solid #a0a0a0;border-bottom:1px solid #a0a0a0;border-radius:0 0 5px 0"></div><div class="a" style="left:1144px;top:722px;width:48px;height:24px;background:#f2f2f2;border:1px solid #a0a0a0;border-top:none;border-radius:0 0 5px 5px"></div><div class="t" style="left:1103px;top:726px;font-size:12.300px;letter-spacing:-.6px;color:#111">Layers</div><div class="t" style="left:1151px;top:727px;font-size:12.300px;color:#111">Add In</div><div class="a" style="left:1089px;top:746px;width:277px;height:1px;background:#a0a0a0"></div><div class="a" style="left:1089px;top:747px;width:277px;height:1px;background:#fff"></div><div class="a" style="left:277px;top:746px;width:812px;height:1px;background:#fdfdfd"></div><div class="a" style="left:0;top:748px;width:1366px;height:19px;background:#f0f0f0"></div><div class="a" style="left:1023px;top:750px;width:66px;height:18px;border-left:1px solid #a0a0a0;border-top:1px solid #a0a0a0;border-right:1px solid #fff"></div><div class="a" style="left:1092px;top:750px;width:66px;height:18px;border-left:1px solid #a0a0a0;border-top:1px solid #a0a0a0;border-right:1px solid #fff"></div><div class="a" style="left:1161px;top:750px;width:61px;height:18px;border-left:1px solid #a0a0a0;border-top:1px solid #a0a0a0;border-right:1px solid #fff"></div><div class="a" style="left:1224px;top:750px;width:70px;height:18px;border-left:1px solid #a0a0a0;border-top:1px solid #a0a0a0;border-right:1px solid #fff"></div><div class="a" style="left:1297px;top:750px;width:70px;height:18px;border-left:1px solid #a0a0a0;border-top:1px solid #a0a0a0;border-right:1px solid #fff"></div><div class="t" style="left:1026px;top:753px;font-size:12px;letter-spacing:-.6px;color:#111">X: 1929.010</div><div class="t" style="left:1095px;top:753px;font-size:12px;letter-spacing:-.6px;color:#111">Y: 292.144</div></div></body></html>
